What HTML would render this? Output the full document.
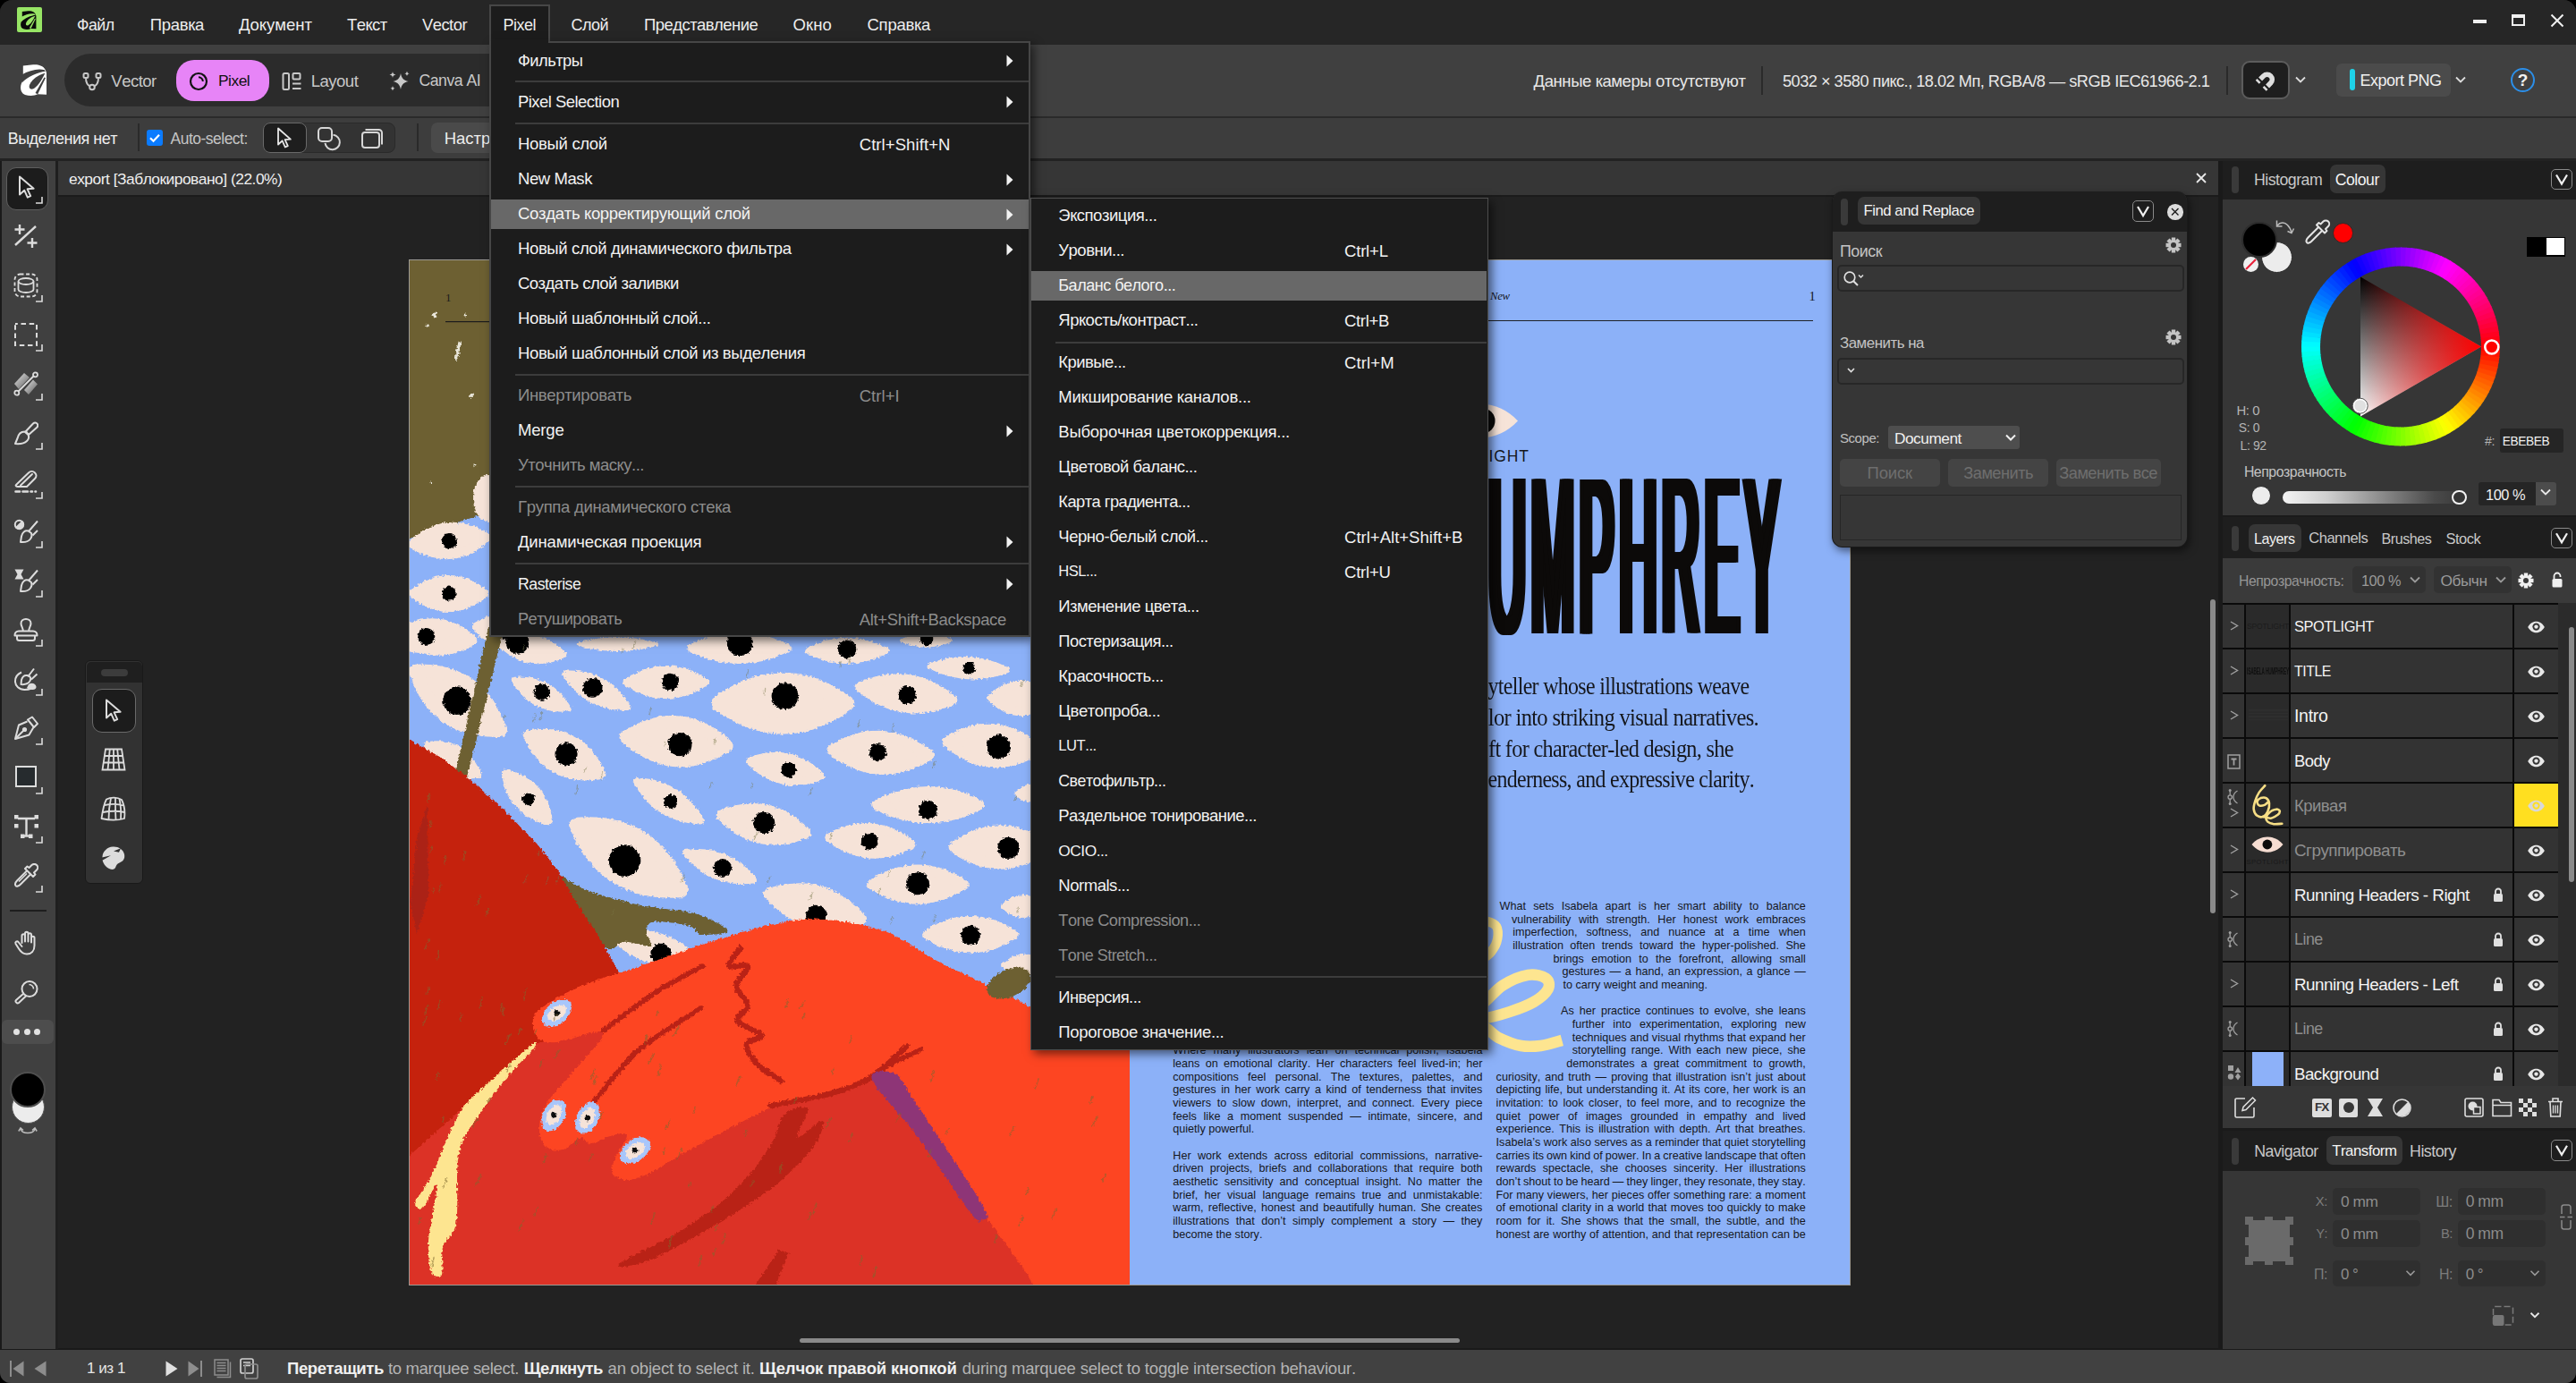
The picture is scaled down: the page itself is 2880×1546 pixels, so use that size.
<!DOCTYPE html>
<html lang="ru"><head><meta charset="utf-8"><title>Affinity</title>
<style>
html,body{margin:0;padding:0;background:#000;}
body{width:2880px;height:1546px;position:relative;overflow:hidden;font-family:'Liberation Sans','DejaVu Sans',sans-serif;font-kerning:none;}
#app{position:absolute;left:0;top:0;width:2880px;height:1546px;overflow:hidden;border-radius:14px 14px 12px 12px;background:#262626;}
#app div,#app span,#app svg{box-sizing:border-box;}
</style></head><body><div id="app">
<div style="position:absolute;left:65px;top:180px;width:2415px;height:39px;background:#363636;"></div>
<div style="position:absolute;left:65px;top:218px;width:2415px;height:2px;background:#1b1b1b;"></div>
<div style="position:absolute;left:65px;top:220px;width:2415px;height:1288px;background:#222222;"></div>
<span style="position:absolute;left:77.0px;top:188.0px;line-height:24px;font-size:17.37px;color:#efefef;font-weight:400;font-family:'Liberation Sans','DejaVu Sans',sans-serif;white-space:pre;letter-spacing:-0.486px;">export [Заблокировано] (22.0%)</span>
<svg style="position:absolute;left:2454px;top:192px;" width="14" height="14" viewBox="0 0 14 14" fill="none"><path d="M2 2l10 10M12 2L2 12" stroke="#e8e8e8" stroke-width="1.800"/></svg>
<div style="position:absolute;left:2480px;top:179px;width:5px;height:1329px;background:#1a1a1a;"></div>
<div style="position:absolute;left:457px;top:290px;width:1612px;height:1147px;background:#9c9a94;"></div>
<div style="position:absolute;left:1263px;top:291px;width:805px;height:1145px;background:#8cb1f8;"></div>
<span style="position:absolute;left:1666.0px;top:322.0px;line-height:19px;font-size:12.74px;color:#15171c;font-weight:400;font-family:'Liberation Serif','DejaVu Serif',serif;white-space:pre;letter-spacing:-0.357px;font-style:italic;">New</span>
<span style="position:absolute;left:2022.5px;top:322.0px;line-height:19px;font-size:14.5px;color:#15171c;font-weight:400;font-family:'Liberation Serif','DejaVu Serif',serif;white-space:pre;">1</span>
<div style="position:absolute;left:1311px;top:357.5px;width:716px;height:1.3px;background:#1f2126;"></div>
<svg style="position:absolute;left:1617px;top:447.8px;" width="81" height="45" viewBox="0 0 81 45" fill="none"><path d="M1 22.500C24 -2.500 56 -2.500 80 22.500C56 47.500 24 47.500 1 22.500z" fill="#f6e3d8"/><circle cx="40.500" cy="22.500" r="14" fill="#0b0b0b"/></svg>
<span style="position:absolute;left:1603.0px;top:499.0px;line-height:22px;font-size:17.46px;color:#15171c;font-weight:400;font-family:'Liberation Sans','DejaVu Sans',sans-serif;white-space:pre;letter-spacing:0.873px;">SPOTLIGHT</span>
<span style="position:absolute;left:1311px;top:476.500px;line-height:290px;font-size:250px;font-weight:400;color:#0c0a09;white-space:pre;font-family:'Liberation Sans','DejaVu Sans',sans-serif;transform-origin:0 0;transform:scaleX(0.23);letter-spacing:27px;text-shadow:19px 0 0 #0c0a09,-19px 0 0 #0c0a09,9px 0 0 #0c0a09,-9px 0 0 #0c0a09;" id="title">ISABELA HUMPHREY</span>
<span style="position:absolute;left:1663.5px;top:749.3px;line-height:36px;font-size:23.91px;color:#15171c;font-weight:400;font-family:'Liberation Serif','DejaVu Serif',serif;white-space:pre;letter-spacing:-0.670px;transform:scaleY(1.120);">yteller whose illustrations weave</span>
<span style="position:absolute;left:1663.8px;top:784.3px;line-height:36px;font-size:24.58px;color:#15171c;font-weight:400;font-family:'Liberation Serif','DejaVu Serif',serif;white-space:pre;letter-spacing:-0.688px;transform:scaleY(1.120);">lor into striking visual narratives.</span>
<span style="position:absolute;left:1664.0px;top:818.8px;line-height:36px;font-size:24.26px;color:#15171c;font-weight:400;font-family:'Liberation Serif','DejaVu Serif',serif;white-space:pre;letter-spacing:-0.679px;transform:scaleY(1.120);">ft for character-led design, she</span>
<span style="position:absolute;left:1663.5px;top:853.3px;line-height:36px;font-size:23.88px;color:#15171c;font-weight:400;font-family:'Liberation Serif','DejaVu Serif',serif;white-space:pre;letter-spacing:-0.669px;transform:scaleY(1.120);">enderness, and expressive clarity.</span>
<span style="position:absolute;left:1676.6px;top:1004.8px;line-height:16px;font-size:12.6px;color:#15171c;font-family:'Liberation Sans','DejaVu Sans',sans-serif;white-space:pre;word-spacing:4.810px;">What sets Isabela apart is her smart ability to balance</span>
<span style="position:absolute;left:1689.9px;top:1019.5px;line-height:16px;font-size:12.6px;color:#15171c;font-family:'Liberation Sans','DejaVu Sans',sans-serif;white-space:pre;word-spacing:5.002px;">vulnerability with strength. Her honest work embraces</span>
<span style="position:absolute;left:1691.3px;top:1034.1px;line-height:16px;font-size:12.6px;color:#15171c;font-family:'Liberation Sans','DejaVu Sans',sans-serif;white-space:pre;word-spacing:6.681px;">imperfection, softness, and nuance at a time when</span>
<span style="position:absolute;left:1691.3px;top:1048.8px;line-height:16px;font-size:12.6px;color:#15171c;font-family:'Liberation Sans','DejaVu Sans',sans-serif;white-space:pre;word-spacing:3.828px;">illustration often trends toward the hyper-polished. She</span>
<span style="position:absolute;left:1736.6px;top:1063.5px;line-height:16px;font-size:12.6px;color:#15171c;font-family:'Liberation Sans','DejaVu Sans',sans-serif;white-space:pre;word-spacing:4.799px;">brings emotion to the forefront, allowing small</span>
<span style="position:absolute;left:1746.4px;top:1078.1px;line-height:16px;font-size:12.6px;color:#15171c;font-family:'Liberation Sans','DejaVu Sans',sans-serif;white-space:pre;word-spacing:1.234px;">gestures — a hand, an expression, a glance —</span>
<span style="position:absolute;left:1747.4px;top:1092.8px;line-height:16px;font-size:12.6px;color:#15171c;font-family:'Liberation Sans','DejaVu Sans',sans-serif;white-space:pre;">to carry weight and meaning.</span>
<span style="position:absolute;left:1745.0px;top:1122.2px;line-height:16px;font-size:12.6px;color:#15171c;font-family:'Liberation Sans','DejaVu Sans',sans-serif;white-space:pre;word-spacing:2.512px;">As her practice continues to evolve, she leans</span>
<span style="position:absolute;left:1757.7px;top:1136.8px;line-height:16px;font-size:12.6px;color:#15171c;font-family:'Liberation Sans','DejaVu Sans',sans-serif;white-space:pre;word-spacing:5.771px;">further into experimentation, exploring new</span>
<span style="position:absolute;left:1757.7px;top:1151.5px;line-height:16px;font-size:12.6px;color:#15171c;font-family:'Liberation Sans','DejaVu Sans',sans-serif;white-space:pre;word-spacing:0.110px;">techniques and visual rhythms that expand her</span>
<span style="position:absolute;left:1757.7px;top:1166.2px;line-height:16px;font-size:12.6px;color:#15171c;font-family:'Liberation Sans','DejaVu Sans',sans-serif;white-space:pre;word-spacing:2.446px;">storytelling range. With each new piece, she</span>
<span style="position:absolute;left:1751.3px;top:1180.8px;line-height:16px;font-size:12.6px;color:#15171c;font-family:'Liberation Sans','DejaVu Sans',sans-serif;white-space:pre;word-spacing:3.522px;">demonstrates a great commitment to growth,</span>
<span style="position:absolute;left:1672.6px;top:1195.5px;line-height:16px;font-size:12.6px;color:#15171c;font-family:'Liberation Sans','DejaVu Sans',sans-serif;white-space:pre;word-spacing:1.522px;">curiosity, and truth — proving that illustration isn’t just about</span>
<span style="position:absolute;left:1672.6px;top:1210.2px;line-height:16px;font-size:12.6px;color:#15171c;font-family:'Liberation Sans','DejaVu Sans',sans-serif;white-space:pre;word-spacing:0.926px;">depicting life, but understanding it. At its core, her work is an</span>
<span style="position:absolute;left:1672.6px;top:1224.8px;line-height:16px;font-size:12.6px;color:#15171c;font-family:'Liberation Sans','DejaVu Sans',sans-serif;white-space:pre;word-spacing:2.067px;">invitation: to look closer, to feel more, and to recognize the</span>
<span style="position:absolute;left:1672.6px;top:1239.5px;line-height:16px;font-size:12.6px;color:#15171c;font-family:'Liberation Sans','DejaVu Sans',sans-serif;white-space:pre;word-spacing:5.906px;">quiet power of images grounded in empathy and lived</span>
<span style="position:absolute;left:1672.6px;top:1254.2px;line-height:16px;font-size:12.6px;color:#15171c;font-family:'Liberation Sans','DejaVu Sans',sans-serif;white-space:pre;word-spacing:2.062px;">experience. This is illustration with depth. Art that breathes.</span>
<span style="position:absolute;left:1672.6px;top:1268.9px;line-height:16px;font-size:12.6px;color:#15171c;font-family:'Liberation Sans','DejaVu Sans',sans-serif;white-space:pre;word-spacing:-0.033px;">Isabela’s work also serves as a reminder that quiet storytelling</span>
<span style="position:absolute;left:1672.6px;top:1283.5px;line-height:16px;font-size:12.6px;color:#15171c;font-family:'Liberation Sans','DejaVu Sans',sans-serif;white-space:pre;word-spacing:-0.475px;">carries its own kind of power. In a creative landscape that often</span>
<span style="position:absolute;left:1672.6px;top:1298.2px;line-height:16px;font-size:12.6px;color:#15171c;font-family:'Liberation Sans','DejaVu Sans',sans-serif;white-space:pre;word-spacing:3.921px;">rewards spectacle, she chooses sincerity. Her illustrations</span>
<span style="position:absolute;left:1672.6px;top:1312.9px;line-height:16px;font-size:12.6px;color:#15171c;font-family:'Liberation Sans','DejaVu Sans',sans-serif;white-space:pre;word-spacing:-0.414px;">don’t shout to be heard — they linger, they resonate, they stay.</span>
<span style="position:absolute;left:1672.6px;top:1327.5px;line-height:16px;font-size:12.6px;color:#15171c;font-family:'Liberation Sans','DejaVu Sans',sans-serif;white-space:pre;word-spacing:0.281px;">For many viewers, her pieces offer something rare: a moment</span>
<span style="position:absolute;left:1672.6px;top:1342.2px;line-height:16px;font-size:12.6px;color:#15171c;font-family:'Liberation Sans','DejaVu Sans',sans-serif;white-space:pre;word-spacing:0.673px;">of emotional clarity in a world that moves too quickly to make</span>
<span style="position:absolute;left:1672.6px;top:1356.9px;line-height:16px;font-size:12.6px;color:#15171c;font-family:'Liberation Sans','DejaVu Sans',sans-serif;white-space:pre;word-spacing:2.899px;">room for it. She shows that the small, the subtle, and the</span>
<span style="position:absolute;left:1672.6px;top:1371.5px;line-height:16px;font-size:12.6px;color:#15171c;font-family:'Liberation Sans','DejaVu Sans',sans-serif;white-space:pre;word-spacing:0.270px;">honest are worthy of attention, and that representation can be</span>
<span style="position:absolute;left:1311.3px;top:1166.2px;line-height:16px;font-size:12.6px;color:#15171c;font-family:'Liberation Sans','DejaVu Sans',sans-serif;white-space:pre;word-spacing:4.541px;">Where many illustrators lean on technical polish, Isabela</span>
<span style="position:absolute;left:1311.3px;top:1180.8px;line-height:16px;font-size:12.6px;color:#15171c;font-family:'Liberation Sans','DejaVu Sans',sans-serif;white-space:pre;word-spacing:2.751px;">leans on emotional clarity. Her characters feel lived-in; her</span>
<span style="position:absolute;left:1311.3px;top:1195.5px;line-height:16px;font-size:12.6px;color:#15171c;font-family:'Liberation Sans','DejaVu Sans',sans-serif;white-space:pre;word-spacing:6.811px;">compositions feel personal. The textures, palettes, and</span>
<span style="position:absolute;left:1311.3px;top:1210.2px;line-height:16px;font-size:12.6px;color:#15171c;font-family:'Liberation Sans','DejaVu Sans',sans-serif;white-space:pre;word-spacing:2.060px;">gestures in her work carry a kind of tenderness that invites</span>
<span style="position:absolute;left:1311.3px;top:1224.8px;line-height:16px;font-size:12.6px;color:#15171c;font-family:'Liberation Sans','DejaVu Sans',sans-serif;white-space:pre;word-spacing:3.186px;">viewers to slow down, interpret, and connect. Every piece</span>
<span style="position:absolute;left:1311.3px;top:1239.5px;line-height:16px;font-size:12.6px;color:#15171c;font-family:'Liberation Sans','DejaVu Sans',sans-serif;white-space:pre;word-spacing:4.147px;">feels like a moment suspended — intimate, sincere, and</span>
<span style="position:absolute;left:1311.3px;top:1254.2px;line-height:16px;font-size:12.6px;color:#15171c;font-family:'Liberation Sans','DejaVu Sans',sans-serif;white-space:pre;">quietly powerful.</span>
<span style="position:absolute;left:1311.3px;top:1283.5px;line-height:16px;font-size:12.6px;color:#15171c;font-family:'Liberation Sans','DejaVu Sans',sans-serif;white-space:pre;word-spacing:3.907px;">Her work extends across editorial commissions, narrative-</span>
<span style="position:absolute;left:1311.3px;top:1298.2px;line-height:16px;font-size:12.6px;color:#15171c;font-family:'Liberation Sans','DejaVu Sans',sans-serif;white-space:pre;word-spacing:3.639px;">driven projects, briefs and collaborations that require both</span>
<span style="position:absolute;left:1311.3px;top:1312.9px;line-height:16px;font-size:12.6px;color:#15171c;font-family:'Liberation Sans','DejaVu Sans',sans-serif;white-space:pre;word-spacing:3.639px;">aesthetic sensitivity and conceptual insight. No matter the</span>
<span style="position:absolute;left:1311.3px;top:1327.5px;line-height:16px;font-size:12.6px;color:#15171c;font-family:'Liberation Sans','DejaVu Sans',sans-serif;white-space:pre;word-spacing:3.738px;">brief, her visual language remains true and unmistakable:</span>
<span style="position:absolute;left:1311.3px;top:1342.2px;line-height:16px;font-size:12.6px;color:#15171c;font-family:'Liberation Sans','DejaVu Sans',sans-serif;white-space:pre;word-spacing:1.740px;">warm, reflective, honest and beautifully human. She creates</span>
<span style="position:absolute;left:1311.3px;top:1356.9px;line-height:16px;font-size:12.6px;color:#15171c;font-family:'Liberation Sans','DejaVu Sans',sans-serif;white-space:pre;word-spacing:3.977px;">illustrations that don’t simply complement a story — they</span>
<span style="position:absolute;left:1311.3px;top:1371.5px;line-height:16px;font-size:12.6px;color:#15171c;font-family:'Liberation Sans','DejaVu Sans',sans-serif;white-space:pre;">become the story.</span>
<svg style="position:absolute;left:0;top:0" width="2880" height="1546" viewBox="0 0 2880 1546"><path d="M1608.2 1040.5C1611.9 1038.3 1622.5 1029.7 1630.5 1027.7C1638.4 1025.7 1649.0 1027.5 1655.9 1028.5C1662.8 1029.6 1668.7 1031.3 1671.8 1034.1C1674.9 1036.9 1674.9 1041.0 1674.7 1045.2C1674.4 1049.5 1673.1 1055.2 1670.2 1059.5C1667.4 1063.9 1665.2 1067.8 1657.5 1071.5C1649.8 1075.2 1629.7 1080.1 1624.1 1081.8" stroke="#fde590" stroke-width="10.5" stroke-linecap="butt" stroke-linejoin="round" fill="none"/><path d="M1600.2 1140.7C1605.3 1139.3 1621.2 1135.6 1630.5 1132.7C1639.7 1129.8 1647.7 1128.3 1655.9 1123.2C1664.1 1118.0 1671.0 1107.3 1679.8 1101.7C1688.5 1096.1 1700.3 1091.1 1708.4 1089.8C1716.5 1088.4 1724.6 1091.1 1728.3 1093.7C1732.0 1096.4 1732.9 1101.3 1730.7 1105.7C1728.4 1110.1 1721.9 1115.8 1714.8 1120.0C1707.6 1124.2 1697.5 1127.9 1687.7 1131.1C1677.9 1134.3 1666.0 1137.5 1655.9 1139.1C1645.8 1140.7 1633.1 1139.1 1627.3 1140.7C1621.4 1142.3 1616.1 1147.6 1620.9 1148.6C1625.7 1149.7 1646.9 1145.2 1655.9 1147.0C1664.9 1148.9 1667.6 1156.1 1675.0 1159.8C1682.4 1163.4 1692.5 1167.5 1700.5 1169.0C1708.4 1170.5 1715.1 1170.0 1722.7 1169.0C1730.4 1168.0 1742.3 1164.0 1746.3 1162.9" stroke="#fde590" stroke-width="12.5" stroke-linecap="butt" stroke-linejoin="round" fill="none"/></svg>
<svg style="position:absolute;left:0;top:0" width="2880" height="1546" viewBox="0 0 2880 1546"><defs><filter id="rough" x="-2%" y="-2%" width="104%" height="104%"><feTurbulence type="fractalNoise" baseFrequency="0.35" numOctaves="2" seed="3" result="n"/><feDisplacementMap in="SourceGraphic" in2="n" scale="5" xChannelSelector="R" yChannelSelector="G"/></filter><clipPath id="lp"><rect x="458" y="291" width="805" height="1145"/></clipPath></defs><g clip-path="url(#lp)"><g filter="url(#rough)"><rect x="440" y="280" width="840" height="1170" fill="#6d6030"/><polygon points="440.0,608.0 548.0,572.0 700.0,520.0 1280.0,520.0 1280.0,1450.0 440.0,1450.0" fill="#8cb1f8" /><path d="M-41.4 0Q0 -30.6 41.4 0Q0 30.6 -41.4 0Z" fill="#f6e3d8" transform="translate(502.5,604.5) rotate(-5)" stroke="#f6e3d8" stroke-width="10.2" stroke-linejoin="round"/><circle cx="502.5" cy="604.5" r="8.5" fill="#060606"/><path d="M-39.5 0Q0 -30.6 39.5 0Q0 30.6 -39.5 0Z" fill="#f6e3d8" transform="translate(501.8,663.5) rotate(0)" stroke="#f6e3d8" stroke-width="10.2" stroke-linejoin="round"/><circle cx="501.8" cy="663.5" r="8.0" fill="#060606"/><path d="M-41.4 0Q0 -30.6 41.4 0Q0 30.6 -41.4 0Z" fill="#f6e3d8" transform="translate(487.0,712.0) rotate(5)" stroke="#f6e3d8" stroke-width="10.2" stroke-linejoin="round"/><circle cx="477.0" cy="712.0" r="10.0" fill="#060606"/><path d="M-28.2 0Q0 -25.5 28.2 0Q0 25.5 -28.2 0Z" fill="#f6e3d8" transform="translate(560.0,705.0) rotate(10)" stroke="#f6e3d8" stroke-width="8.5" stroke-linejoin="round"/><circle cx="575.0" cy="717.0" r="14.0" fill="#060606"/><ellipse cx="545" cy="557" rx="16" ry="26" fill="#f6e3d8"/><path d="M-37.8 0Q0 -24.9 37.8 0Q0 24.9 -37.8 0Z" fill="#f6e3d8" transform="translate(477.3,712.9) rotate(-8)" stroke="#f6e3d8" stroke-width="8.3" stroke-linejoin="round"/><circle cx="476.8" cy="711.5" r="9.5" fill="#060606"/><path d="M-35.1 0Q0 -23.4 35.1 0Q0 23.4 -35.1 0Z" fill="#f6e3d8" transform="translate(595.1,725.9) rotate(10)" stroke="#f6e3d8" stroke-width="7.8" stroke-linejoin="round"/><circle cx="578.5" cy="717.8" r="12.9" fill="#060606"/><path d="M-43.2 0Q0 -11.7 43.2 0Q0 11.7 -43.2 0Z" fill="#f6e3d8" transform="translate(689.9,720.1) rotate(0)" stroke="#f6e3d8" stroke-width="3.9" stroke-linejoin="round"/><path d="M-54.0 0Q0 -26.4 54.0 0Q0 26.4 -54.0 0Z" fill="#f6e3d8" transform="translate(826.4,724.4) rotate(0)" stroke="#f6e3d8" stroke-width="8.8" stroke-linejoin="round"/><circle cx="827.2" cy="718.7" r="14.4" fill="#060606"/><path d="M-43.2 0Q0 -22.0 43.2 0Q0 22.0 -43.2 0Z" fill="#f6e3d8" transform="translate(947.0,727.3) rotate(0)" stroke="#f6e3d8" stroke-width="7.3" stroke-linejoin="round"/><circle cx="947.0" cy="725.9" r="10.3" fill="#060606"/><path d="M-27.0 0Q0 -11.7 27.0 0Q0 11.7 -27.0 0Z" fill="#f6e3d8" transform="translate(1036.1,715.8) rotate(0)" stroke="#f6e3d8" stroke-width="3.9" stroke-linejoin="round"/><circle cx="1036.1" cy="714.4" r="7.2" fill="#060606"/><path d="M-43.2 0Q0 -19.0 43.2 0Q0 19.0 -43.2 0Z" fill="#f6e3d8" transform="translate(1082.9,746.8) rotate(3)" stroke="#f6e3d8" stroke-width="6.3" stroke-linejoin="round"/><circle cx="1083.5" cy="746.8" r="6.9" fill="#060606"/><path d="M-58.1 0Q0 -43.7 58.1 0Q0 43.7 -58.1 0Z" fill="#f6e3d8" transform="translate(511.8,783.3) rotate(35)" stroke="#f6e3d8" stroke-width="14.6" stroke-linejoin="round"/><circle cx="511.0" cy="783.3" r="15.8" fill="#060606"/><path d="M-33.8 0Q0 -21.2 33.8 0Q0 21.2 -33.8 0Z" fill="#f6e3d8" transform="translate(605.2,776.1) rotate(28)" stroke="#f6e3d8" stroke-width="7.1" stroke-linejoin="round"/><circle cx="605.8" cy="773.8" r="9.2" fill="#060606"/><path d="M-39.2 0Q0 -22.5 39.2 0Q0 22.5 -39.2 0Z" fill="#f6e3d8" transform="translate(666.9,771.8) rotate(28)" stroke="#f6e3d8" stroke-width="7.5" stroke-linejoin="round"/><circle cx="662.6" cy="768.9" r="10.9" fill="#060606"/><path d="M-43.2 0Q0 -27.8 43.2 0Q0 27.8 -43.2 0Z" fill="#f6e3d8" transform="translate(744.5,762.6) rotate(0)" stroke="#f6e3d8" stroke-width="9.3" stroke-linejoin="round"/><circle cx="749.4" cy="762.3" r="9.5" fill="#060606"/><path d="M-71.6 0Q0 -51.3 71.6 0Q0 51.3 -71.6 0Z" fill="#f6e3d8" transform="translate(875.2,786.2) rotate(0)" stroke="#f6e3d8" stroke-width="17.1" stroke-linejoin="round"/><circle cx="877.5" cy="778.1" r="14.9" fill="#060606"/><path d="M-52.7 0Q0 -32.2 52.7 0Q0 32.2 -52.7 0Z" fill="#f6e3d8" transform="translate(1013.1,775.3) rotate(8)" stroke="#f6e3d8" stroke-width="10.7" stroke-linejoin="round"/><circle cx="1014.5" cy="777.0" r="10.1" fill="#060606"/><path d="M-32.4 0Q0 -29.3 32.4 0Q0 29.3 -32.4 0Z" fill="#f6e3d8" transform="translate(1140.9,780.4) rotate(0)" stroke="#f6e3d8" stroke-width="9.8" stroke-linejoin="round"/><path d="M-45.9 0Q0 -35.0 45.9 0Q0 35.0 -45.9 0Z" fill="#f6e3d8" transform="translate(631.0,843.6) rotate(28)" stroke="#f6e3d8" stroke-width="11.7" stroke-linejoin="round"/><circle cx="633.0" cy="842.8" r="12.6" fill="#060606"/><path d="M-56.7 0Q0 -42.5 56.7 0Q0 42.5 -56.7 0Z" fill="#f6e3d8" transform="translate(756.0,828.7) rotate(5)" stroke="#f6e3d8" stroke-width="14.2" stroke-linejoin="round"/><circle cx="760.3" cy="832.1" r="13.2" fill="#060606"/><path d="M-40.5 0Q0 -26.4 40.5 0Q0 26.4 -40.5 0Z" fill="#f6e3d8" transform="translate(878.1,859.4) rotate(12)" stroke="#f6e3d8" stroke-width="8.8" stroke-linejoin="round"/><circle cx="881.8" cy="860.3" r="8.6" fill="#060606"/><path d="M-54.0 0Q0 -36.6 54.0 0Q0 36.6 -54.0 0Z" fill="#f6e3d8" transform="translate(984.4,841.3) rotate(3)" stroke="#f6e3d8" stroke-width="12.2" stroke-linejoin="round"/><circle cx="981.5" cy="840.8" r="9.8" fill="#060606"/><path d="M-50.0 0Q0 -36.6 50.0 0Q0 36.6 -50.0 0Z" fill="#f6e3d8" transform="translate(1109.3,833.6) rotate(5)" stroke="#f6e3d8" stroke-width="12.2" stroke-linejoin="round"/><circle cx="1116.5" cy="835.0" r="13.5" fill="#060606"/><path d="M-36.5 0Q0 -25.0 36.5 0Q0 25.0 -36.5 0Z" fill="#f6e3d8" transform="translate(589.4,891.0) rotate(48)" stroke="#f6e3d8" stroke-width="8.3" stroke-linejoin="round"/><circle cx="590.8" cy="893.3" r="6.9" fill="#060606"/><path d="M-41.9 0Q0 -23.7 41.9 0Q0 23.7 -41.9 0Z" fill="#f6e3d8" transform="translate(747.4,895.3) rotate(32)" stroke="#f6e3d8" stroke-width="7.9" stroke-linejoin="round"/><circle cx="749.7" cy="895.9" r="7.8" fill="#060606"/><path d="M-48.6 0Q0 -33.0 48.6 0Q0 33.0 -48.6 0Z" fill="#f6e3d8" transform="translate(853.7,921.2) rotate(12)" stroke="#f6e3d8" stroke-width="11.0" stroke-linejoin="round"/><circle cx="854.2" cy="919.8" r="12.1" fill="#060606"/><path d="M-58.1 0Q0 -30.8 58.1 0Q0 30.8 -58.1 0Z" fill="#f6e3d8" transform="translate(1037.5,899.7) rotate(0)" stroke="#f6e3d8" stroke-width="10.3" stroke-linejoin="round"/><circle cx="1037.5" cy="905.4" r="10.6" fill="#060606"/><path d="M-16.2 0Q0 -14.7 16.2 0Q0 14.7 -16.2 0Z" fill="#f6e3d8" transform="translate(1152.4,886.7) rotate(0)" stroke="#f6e3d8" stroke-width="4.9" stroke-linejoin="round"/><path d="M-68.9 0Q0 -50.0 68.9 0Q0 50.0 -68.9 0Z" fill="#f6e3d8" transform="translate(702.9,958.5) rotate(32)" stroke="#f6e3d8" stroke-width="16.7" stroke-linejoin="round"/><circle cx="698.5" cy="962.0" r="17.8" fill="#060606"/><path d="M-40.5 0Q0 -22.5 40.5 0Q0 22.5 -40.5 0Z" fill="#f6e3d8" transform="translate(804.8,968.6) rotate(22)" stroke="#f6e3d8" stroke-width="7.5" stroke-linejoin="round"/><circle cx="807.7" cy="970.0" r="10.1" fill="#060606"/><path d="M-45.9 0Q0 -29.3 45.9 0Q0 29.3 -45.9 0Z" fill="#f6e3d8" transform="translate(972.9,939.9) rotate(5)" stroke="#f6e3d8" stroke-width="9.8" stroke-linejoin="round"/><circle cx="972.3" cy="940.4" r="9.5" fill="#060606"/><path d="M-51.3 0Q0 -36.6 51.3 0Q0 36.6 -51.3 0Z" fill="#f6e3d8" transform="translate(1118.0,947.1) rotate(0)" stroke="#f6e3d8" stroke-width="12.2" stroke-linejoin="round"/><circle cx="1127.4" cy="947.9" r="12.1" fill="#060606"/><path d="M-51.3 0Q0 -33.0 51.3 0Q0 33.0 -51.3 0Z" fill="#f6e3d8" transform="translate(1026.0,988.7) rotate(0)" stroke="#f6e3d8" stroke-width="11.0" stroke-linejoin="round"/><circle cx="1026.0" cy="987.3" r="12.9" fill="#060606"/><path d="M-54.0 0Q0 -35.2 54.0 0Q0 35.2 -54.0 0Z" fill="#f6e3d8" transform="translate(911.1,1013.1) rotate(15)" stroke="#f6e3d8" stroke-width="11.7" stroke-linejoin="round"/><circle cx="912.6" cy="1023.2" r="11.5" fill="#060606"/><path d="M-48.6 0Q0 -30.8 48.6 0Q0 30.8 -48.6 0Z" fill="#f6e3d8" transform="translate(1084.9,1044.7) rotate(0)" stroke="#f6e3d8" stroke-width="10.3" stroke-linejoin="round"/><circle cx="1084.9" cy="1045.6" r="10.9" fill="#060606"/><path d="M-21.6 0Q0 -19.0 21.6 0Q0 19.0 -21.6 0Z" fill="#f6e3d8" transform="translate(1143.8,1013.1) rotate(0)" stroke="#f6e3d8" stroke-width="6.3" stroke-linejoin="round"/><path d="M-45.9 0Q0 -26.4 45.9 0Q0 26.4 -45.9 0Z" fill="#f6e3d8" transform="translate(730.1,1059.1) rotate(15)" stroke="#f6e3d8" stroke-width="8.8" stroke-linejoin="round"/><circle cx="738.8" cy="1066.3" r="11.5" fill="#060606"/><path d="M-24.3 0Q0 -19.0 24.3 0Q0 19.0 -24.3 0Z" fill="#f6e3d8" transform="translate(1146.7,1079.2) rotate(0)" stroke="#f6e3d8" stroke-width="6.3" stroke-linejoin="round"/><path d="M-32.4 0Q0 -25.0 32.4 0Q0 25.0 -32.4 0Z" fill="#f6e3d8" transform="translate(506.1,849.4) rotate(30)" stroke="#f6e3d8" stroke-width="8.3" stroke-linejoin="round"/><polygon points="546.3,700.0 564.1,700.0 521.9,869.5 508.9,865.2" fill="#6d6030" /><path d="M615.2 975.8C616.2 970.0 641.6 989.9 658.3 995.9C675.1 1001.9 695.7 1007.4 715.8 1011.7C735.9 1016.0 762.7 1017.0 779.0 1021.7C795.3 1026.5 812.5 1036.6 813.5 1040.4C814.4 1044.2 791.9 1045.7 784.7 1044.7C777.5 1043.8 779.5 1037.1 770.4 1034.7C761.3 1032.3 738.0 1029.2 730.1 1030.4C722.2 1031.6 723.4 1037.3 723.0 1041.9C722.5 1046.4 731.3 1055.8 727.3 1057.7C723.2 1059.5 706.7 1052.3 698.5 1052.8C690.4 1053.3 686.1 1064.3 678.4 1060.5C670.8 1056.8 663.1 1044.5 652.6 1030.4C642.0 1016.2 614.3 981.5 615.2 975.8Z" fill="#6d6030"/><polygon points="440.0,815.0 456.0,826.0 490.0,845.0 523.0,869.0 563.0,905.0 601.0,944.0 625.0,975.0 641.0,1004.0 665.0,1040.0 690.0,1083.0 740.0,1150.0 640.0,1200.0 440.0,1320.0" fill="#c5200e" /><polygon points="433.5,1313.4 596.5,1167.6 687.8,1141.5 994.3,1190.4 1190.0,1435.6 1190.0,1461.1 433.5,1461.1" fill="#dc3226" /><path d="M910.9 1027.4C887.5 1026.8 869.0 1032.3 847.6 1037.2C826.2 1042.1 804.3 1049.6 782.4 1056.7C760.4 1063.9 738.1 1072.3 715.9 1079.9C693.6 1087.5 667.5 1094.3 648.7 1102.4C629.9 1110.5 611.8 1121.1 603.0 1128.5C594.2 1135.8 595.9 1141.0 595.9 1146.4C595.9 1151.8 598.6 1158.0 603.0 1161.1C607.5 1164.2 610.7 1166.1 622.6 1165.0C634.6 1163.9 672.6 1148.2 674.8 1154.6C677.0 1161.0 646.5 1189.9 635.7 1203.5C624.8 1217.1 615.0 1226.3 609.6 1236.1C604.1 1245.9 603.0 1254.6 603.0 1262.2C603.0 1269.8 605.2 1277.9 609.6 1281.7C613.9 1285.5 622.6 1286.6 629.1 1285.0C635.7 1283.4 643.3 1272.9 648.7 1272.0C654.1 1271.0 656.3 1279.4 661.7 1279.1C667.2 1278.9 674.8 1272.1 681.3 1270.3C687.8 1268.6 699.8 1264.6 700.9 1268.7C702.0 1272.8 690.5 1287.7 687.8 1294.8C685.1 1301.8 682.4 1307.0 684.6 1311.1C686.7 1315.2 693.8 1319.2 700.9 1319.2C707.9 1319.2 716.1 1316.2 727.0 1311.1C737.8 1305.9 743.3 1300.5 766.1 1288.3C788.9 1276.0 836.7 1248.6 863.9 1237.7C891.1 1226.8 910.6 1228.2 929.1 1223.0C947.6 1217.9 960.6 1203.5 974.8 1206.7C988.9 1210.0 992.7 1217.1 1013.9 1242.6C1035.1 1268.1 1078.0 1327.8 1101.9 1360.0C1125.9 1392.2 1144.9 1418.8 1157.4 1435.6C1169.9 1452.5 1155.2 1456.8 1176.9 1461.1C1198.7 1465.3 1269.3 1503.5 1287.8 1461.1C1306.3 1418.7 1310.6 1262.7 1287.8 1206.7C1265.0 1150.8 1190.7 1147.2 1150.9 1125.2C1111.0 1103.2 1076.0 1088.8 1048.8 1074.7C1021.6 1060.5 1010.8 1048.3 987.8 1040.4C964.8 1032.6 934.2 1027.9 910.9 1027.4Z" fill="#fd4523"/><polygon points="1124.8,1386.1 1265.0,1157.8 1287.8,1157.8 1287.8,1461.1 1170.4,1461.1" fill="#fd4523" /><ellipse cx="1128.0" cy="1099.1" rx="26" ry="15" fill="#6d6030" transform="rotate(-25 1128.0 1099.1)"/><path d="M785.6 1080.2C777.0 1085.0 752.0 1097.0 733.5 1108.9C715.0 1120.9 684.6 1144.8 674.8 1152.0" stroke="#b92214" stroke-width="5.5" stroke-linecap="round" stroke-linejoin="round" fill="none"/><path d="M784.0 1126.8C772.3 1134.7 733.7 1156.9 713.9 1174.1C694.1 1191.4 673.1 1220.9 665.0 1230.2" stroke="#b92214" stroke-width="5.5" stroke-linecap="round" stroke-linejoin="round" fill="none"/><path d="M828.0 1060.0C825.9 1063.3 813.6 1076.2 815.0 1079.6C816.4 1082.9 834.8 1076.4 836.2 1080.2C837.6 1084.0 823.1 1095.2 823.1 1102.4C823.1 1109.6 835.9 1117.1 836.2 1123.6C836.5 1130.1 822.2 1135.9 824.8 1141.5C827.3 1147.1 849.9 1152.8 851.5 1157.2C853.1 1161.5 835.2 1162.1 834.6 1167.6C833.9 1173.2 841.1 1183.6 847.6 1190.4C854.1 1197.2 869.3 1205.4 873.7 1208.4" stroke="#b92214" stroke-width="6" stroke-linecap="round" stroke-linejoin="round" fill="none"/><path d="M860.6 1236.1C872.1 1233.8 910.1 1227.8 929.1 1222.4C948.1 1217.0 960.6 1212.3 974.8 1203.5C988.9 1194.6 1007.4 1174.9 1013.9 1169.2" stroke="#b92214" stroke-width="6" stroke-linecap="round" stroke-linejoin="round" fill="none"/><path d="M981.3 1197.0C989.5 1192.9 1022.1 1176.6 1030.2 1172.5" stroke="#b92214" stroke-width="5" stroke-linecap="round" stroke-linejoin="round" fill="none"/><path d="M696.0 1410.5C706.8 1403.5 745.2 1386.4 766.1 1373.0C787.0 1359.7 805.8 1345.9 821.5 1330.6C837.3 1315.4 851.4 1295.9 860.6 1281.7C869.9 1267.6 869.9 1252.9 877.0 1245.9C884.0 1238.8 900.6 1235.0 903.0 1239.3C905.5 1243.7 888.9 1269.8 891.6 1272.0C894.3 1274.1 916.4 1250.8 919.3 1252.4C922.3 1254.0 918.8 1269.2 909.6 1281.7C900.3 1294.2 882.4 1312.7 863.9 1327.4C845.4 1342.1 820.4 1356.7 798.7 1369.8C777.0 1382.8 749.8 1398.0 733.5 1405.6C717.2 1413.3 707.1 1414.6 700.9 1415.4C694.6 1416.2 685.1 1417.6 696.0 1410.5Z" fill="#b92214"/><polygon points="828.0,1461.1 870.4,1397.5 881.8,1400.8 857.4,1461.1" fill="#b92214" /><path d="M974.8 1206.7C970.4 1194.8 992.7 1195.9 1000.9 1200.2C1009.0 1204.6 1012.3 1216.0 1023.7 1232.8C1035.1 1249.7 1056.3 1281.2 1069.3 1301.3C1082.4 1321.4 1097.1 1343.1 1101.9 1353.5C1106.8 1363.8 1101.4 1362.7 1098.7 1363.3C1096.0 1363.8 1097.6 1372.0 1085.6 1356.7C1073.7 1341.5 1045.4 1297.0 1027.0 1272.0C1008.5 1247.0 979.1 1218.7 974.8 1206.7Z" fill="#8e3577"/><path d="M594.9 1167.6C587.8 1172.8 567.4 1191.0 554.1 1203.5C540.8 1216.0 527.0 1224.1 515.0 1242.6C503.0 1261.1 490.8 1297.5 482.4 1314.3C474.0 1331.2 466.1 1337.7 464.5 1343.7C462.8 1349.7 468.5 1353.5 472.6 1350.2C476.7 1347.0 487.8 1318.1 488.9 1324.1C490.0 1330.1 480.2 1369.8 479.1 1386.1C478.0 1402.4 479.9 1415.4 482.4 1422.0C484.8 1428.5 491.6 1430.1 493.8 1425.2C496.0 1420.3 492.7 1402.4 495.4 1392.6C498.2 1382.8 507.1 1383.9 510.1 1366.5C513.1 1349.1 508.7 1308.9 513.4 1288.3C518.0 1267.6 528.3 1257.3 537.8 1242.6C547.3 1227.9 560.7 1211.9 570.4 1200.2C580.2 1188.5 592.4 1177.9 596.5 1172.5C600.6 1167.1 602.0 1162.4 594.9 1167.6Z" fill="#fde590"/><g transform="translate(622.6,1132.4) rotate(-40)"><ellipse rx="19" ry="12" fill="#a8c6fb"/><ellipse rx="12" ry="7.500" fill="#f6e3d8"/><circle r="3.200" fill="#111"/></g><g transform="translate(619.3,1246.5) rotate(-62)"><ellipse rx="19" ry="12" fill="#a8c6fb"/><ellipse rx="12" ry="7.500" fill="#f6e3d8"/><circle r="3.200" fill="#111"/></g><g transform="translate(656.8,1249.8) rotate(-62)"><ellipse rx="19" ry="12" fill="#a8c6fb"/><ellipse rx="12" ry="7.500" fill="#f6e3d8"/><circle r="3.200" fill="#111"/></g><g transform="translate(710.0,1286.0) rotate(-35)"><ellipse rx="19" ry="12" fill="#a8c6fb"/><ellipse rx="12" ry="7.500" fill="#f6e3d8"/><circle r="3.200" fill="#111"/></g><path d="M721 1167l2.1 -10.3M888 1233l2.2 -6.0M495 1254l1.3 -6.4M800 1376l1.7 -6.6M961 1414l3.1 -9.6M1236 1134l3.3 -11.6M579 1157l3.6 -7.3M608 1300l3.1 -10.0M898 1139l1.6 -6.2M1003 1253l3.0 -7.6M823 1213l4.7 -10.6M658 1298l4.5 -8.6M1041 1209l2.8 -12.6M795 1355l2.4 -6.6M496 1327l4.2 -10.6M1157 1217l4.1 -10.1M923 1261l5.7 -10.4M840 1326l2.6 -5.9M976 1428l3.2 -11.3M770 1327l2.0 -5.8M598 1156l2.7 -5.8M567 1197l4.0 -7.8M529 1259l4.6 -8.7M1112 1388l2.5 -7.5M748 1394l2.9 -12.4M604 1192l2.6 -7.2M930 1201l1.9 -5.7M757 1296l5.1 -11.6M872 1311l2.1 -10.5M1176 1362l5.3 -10.9M775 1244l2.6 -6.2M514 1141l1.7 -7.3M734 1136l1.4 -5.8M545 1233l2.9 -5.5M950 1166l2.3 -7.4M753 1158l5.9 -10.4M833 1270l1.4 -6.5M736 1202l2.7 -11.5M483 1415l2.2 -9.5M894 1128l4.8 -8.4M1147 1336l2.3 -7.5M597 1359l4.2 -8.8M725 1189l5.8 -10.1M1139 1370l4.9 -10.6M644 1280l1.6 -8.3M487 1207l3.2 -7.1M1221 1259l6.2 -10.9M1219 1233l1.9 -7.3M620 1183l4.9 -9.2M1129 1269l4.6 -9.5M532 1325l5.4 -11.1M1058 1268l3.2 -6.5M728 1368l3.9 -12.2M782 1414l2.6 -10.8M565 1167l5.4 -11.1M580 1376l5.1 -11.8M742 1290l1.2 -6.8M1232 1321l4.6 -8.5M808 1390l2.9 -11.4M664 1211l2.8 -7.1M670 1250l3.3 -6.1M744 1262l4.7 -8.9M797 1404l3.4 -8.9M879 1126l2.1 -8.8M468 1368l2.4 -6.8M1038 1293l2.9 -7.8M904 1363l2.4 -6.3M661 1206l3.9 -10.7M909 1356l4.0 -11.7M949 1277l3.9 -8.8M543 1024l3.6 -8.1M586 1117l2.1 -11.5M562 1135l1.5 -10.9M484 999l1.1 -6.3M475 1061l4.2 -9.9M489 1073l1.4 -9.9M619 1141l3.0 -6.7M533 1012l4.4 -11.1M491 997l1.9 -8.9M497 966l1.0 -10.3M465 970l2.6 -9.4M473 1146l4.4 -9.8M481 952l2.2 -5.8M537 1126l1.9 -10.7M489 1128l3.1 -8.9M478 896l2.4 -9.8M475 1133l3.5 -9.2M477 1111l2.4 -5.9M560 1130l1.0 -7.5M481 924l1.0 -6.2M518 962l2.0 -10.4" stroke="#7d6a30" stroke-width="1.600" stroke-linecap="round" opacity="0.550" fill="none"/><path d="M855 777l0.6 -6.7M708 725l2.8 -8.2M672 872l1.3 -9.6M1043 858l3.3 -6.7M792 882l4.2 -7.3M762 986l3.0 -8.0M799 831l0.8 -5.2M602 957l1.0 -6.2M610 989l3.5 -8.7M726 798l1.8 -6.2M653 863l3.1 -5.5M1134 895l3.0 -5.4M743 834l1.3 -4.8M840 881l1.8 -5.7M563 805l1.4 -5.3M585 727l1.2 -6.4M905 889l3.2 -8.1M982 1001l1.6 -6.8M1141 768l3.1 -8.0M586 987l3.3 -8.9M993 980l1.8 -5.4M858 987l3.9 -8.1M905 1006l3.2 -7.8M696 730l1.4 -5.5M622 987l2.8 -7.3M929 938l0.7 -7.4M1031 959l2.4 -7.1M949 741l1.7 -8.5M604 805l1.5 -8.5M996 1032l1.9 -7.2M843 939l3.1 -8.3M939 745l1.1 -5.6M998 817l0.7 -7.8M596 806l3.2 -7.7M959 813l2.2 -7.3M835 758l1.6 -9.3M1137 1020l1.4 -4.9M1044 1030l1.5 -7.1M684 1023l2.0 -5.7M644 888l1.4 -9.7" stroke="#77784a" stroke-width="1.300" stroke-linecap="round" opacity="0.450" fill="none"/><polygon points="466.0,935.0 478.0,900.0 479.0,1000.0 466.0,1045.0 459.0,1010.0" fill="#ab2418" /><g fill="#e9e6da"><ellipse cx="512" cy="392" rx="2" ry="11" transform="rotate(12 512 392)"/><circle cx="486" cy="352" r="2.500"/><circle cx="478" cy="364" r="1.800"/><circle cx="527" cy="442" r="2"/><circle cx="531" cy="520" r="1.600"/><circle cx="482" cy="540" r="1.500"/><circle cx="520" cy="352" r="1.500"/></g></g></g><rect x="498" y="359" width="60" height="1.200" fill="#1c1c1c"/><text x="498" y="337" font-family="Liberation Serif,serif" font-size="13" fill="#1c1c1c">1</text></svg>
<div style="position:absolute;left:894px;top:1495.5px;width:738px;height:5px;background:#8a8a8a;border-radius:3px;"></div>
<div style="position:absolute;left:2470.5px;top:670px;width:6px;height:351px;background:#8a8a8a;border-radius:3px;"></div>
<div style="position:absolute;left:95px;top:738px;width:65px;height:250px;background:#323232;border-radius:6px;border:1.500px solid #191919;box-sizing:border-box;"></div>
<div style="position:absolute;left:96.5px;top:739.5px;width:62px;height:23px;background:#1f1f1f;border-radius:5px 5px 0 0;"></div>
<div style="position:absolute;left:113px;top:748px;width:30px;height:8px;background:#3c3c3c;border-radius:4px;"></div>
<div style="position:absolute;left:103px;top:770px;width:48.5px;height:48.5px;background:#1c1c1c;border-radius:11px;border:1.500px solid #6a6a6a;box-sizing:border-box;"></div>
<svg style="position:absolute;left:113px;top:780px;" width="28" height="30" viewBox="0 0 28 30" fill="none"><path d="M6 2.500v20l5.200-4.800 3.600 8 3.400-1.500-3.600-7.900 7-.5z" stroke="#dcdcdc" stroke-width="2" stroke-linejoin="round"/></svg>
<svg style="position:absolute;left:113px;top:836px;" width="28" height="26" viewBox="0 0 28 26" fill="none"><g stroke="#dcdcdc" stroke-width="1.800"><path d="M5 1.500h18l3.500 23h-25z"/><path d="M9.800 1.500L7.500 24.500M14 1.500v23M18.200 1.500l2.300 23M3.800 9h20.400M2.700 16.500h22.600"/></g></svg>
<svg style="position:absolute;left:112px;top:890px;" width="30" height="28" viewBox="0 0 30 28" fill="none"><g stroke="#dcdcdc" stroke-width="1.800" stroke-linejoin="round"><path d="M7 3.500C12 1 19 1 24 4c3 6 4 14 3 21-7 2-17 2-25.500 0C2.500 18 4 9 7 3.500z"/><path d="M12 2.200C10.500 9 9.500 18 9.500 26M17 2c0 8 0 17 .500 24.500M21.500 3c1.500 7 2 15 1.500 23M5 10c6.500-1.500 15-1.500 21.500.5M3 18c7.500-1.500 17-1.500 24.500 0"/></g></svg>
<svg style="position:absolute;left:113px;top:945px;" width="28" height="28" viewBox="0 0 28 28" fill="none"><path d="M13 1.500C19 1 24.500 4 26 10c1 5-1.500 8-5.500 9.500-3 1-3.500 3-4.500 5.500-1.500 2.500-5 2.500-8 .500C3 22 1 17.500 1.500 12.500 2 6.500 7 2 13 1.500z" fill="#dcdcdc"/><path d="M22 3.200L14 6.500l6 1.200z M0 13.800l11-2.600-9.500 5.600z" fill="#323232"/></svg>
<div style="position:absolute;left:0px;top:1508px;width:2880px;height:38px;background:#414141;"></div>
<div style="position:absolute;left:0px;top:1507px;width:2880px;height:2px;background:#1a1a1a;"></div>
<svg style="position:absolute;left:10px;top:1520px;" width="18" height="20" viewBox="0 0 18 20" fill="none"><path d="M2 1v18" stroke="#8d8d8d" stroke-width="2"/><path d="M16.500 1.500v17L4.500 10z" fill="#8d8d8d"/></svg>
<svg style="position:absolute;left:37px;top:1520px;" width="16" height="20" viewBox="0 0 16 20" fill="none"><path d="M14.500 1.500v17L1.500 10z" fill="#8d8d8d"/></svg>
<svg style="position:absolute;left:184px;top:1520px;" width="16" height="20" viewBox="0 0 16 20" fill="none"><path d="M1.500 1.500v17L14.500 10z" fill="#e0e0e0"/></svg>
<svg style="position:absolute;left:209px;top:1520px;" width="18" height="20" viewBox="0 0 18 20" fill="none"><path d="M16 1v18" stroke="#8d8d8d" stroke-width="2"/><path d="M1.500 1.500v17L13.500 10z" fill="#8d8d8d"/></svg>
<svg style="position:absolute;left:238px;top:1518px;" width="22" height="24" viewBox="0 0 22 24" fill="none"><g stroke="#8d8d8d" stroke-width="1.500"><path d="M2 2h15v17H2z"/><path d="M19.500 4.500v17h-15" /><path d="M4.500 5.500h10M4.500 8.500h10M4.500 11.500h10M4.500 14.500h10" stroke-width="1.600"/></g></svg>
<svg style="position:absolute;left:267px;top:1517px;" width="24" height="26" viewBox="0 0 24 26" fill="none"><g stroke="#cfcfcf" stroke-width="1.700"><rect x="2" y="2" width="14" height="16" rx="2"/><path d="M5 6h8M5 9.500h8"/><rect x="7" y="8" width="14" height="16" rx="2" stroke="#8d8d8d"/></g></svg>
<span style="position:absolute;left:97.0px;top:1517.5px;line-height:24px;font-size:17.08px;color:#e6e6e6;font-weight:400;font-family:'Liberation Sans','DejaVu Sans',sans-serif;white-space:pre;letter-spacing:-0.478px;">1 из 1</span>
<span style="position:absolute;left:321.0px;top:1517.5px;line-height:24px;font-size:18.5px;color:#f0f0f0;font-weight:700;font-family:'Liberation Sans','DejaVu Sans',sans-serif;white-space:pre;letter-spacing:-0.395px;">Перетащить</span>
<span style="position:absolute;left:434.0px;top:1517.5px;line-height:24px;font-size:18.5px;color:#b4b4b4;font-weight:400;font-family:'Liberation Sans','DejaVu Sans',sans-serif;white-space:pre;letter-spacing:-0.345px;">to marquee select.</span>
<span style="position:absolute;left:585.7px;top:1517.5px;line-height:24px;font-size:18.5px;color:#f0f0f0;font-weight:700;font-family:'Liberation Sans','DejaVu Sans',sans-serif;white-space:pre;letter-spacing:-0.470px;">Щелкнуть</span>
<span style="position:absolute;left:679.6px;top:1517.5px;line-height:24px;font-size:18.5px;color:#b4b4b4;font-weight:400;font-family:'Liberation Sans','DejaVu Sans',sans-serif;white-space:pre;letter-spacing:-0.198px;">an object to select it.</span>
<span style="position:absolute;left:849.0px;top:1517.5px;line-height:24px;font-size:18.5px;color:#f0f0f0;font-weight:700;font-family:'Liberation Sans','DejaVu Sans',sans-serif;white-space:pre;letter-spacing:-0.163px;">Щелчок правой кнопкой</span>
<span style="position:absolute;left:1075.7px;top:1517.5px;line-height:24px;font-size:18.5px;color:#b4b4b4;font-weight:400;font-family:'Liberation Sans','DejaVu Sans',sans-serif;white-space:pre;letter-spacing:-0.185px;">during marquee select to toggle intersection behaviour.</span>
<div style="position:absolute;left:0px;top:179px;width:2px;height:1329px;background:#1a1a1a;"></div>
<div style="position:absolute;left:2px;top:179px;width:60px;height:1329px;background:#404040;"></div>
<div style="position:absolute;left:62px;top:179px;width:3px;height:1329px;background:#1f1f1f;"></div>
<div style="position:absolute;left:6.5px;top:187px;width:47.5px;height:47.5px;background:#1c1c1c;border-radius:11px;border:1.500px solid #5e5e5e;box-sizing:border-box;"></div>
<svg style="position:absolute;left:15px;top:195.0px;" width="28" height="28" viewBox="0 0 28 28" fill="none"><path d="M7 2.500v20l5.200-4.800 3.600 8 3.400-1.500-3.600-7.900 7-.5z" stroke="#dcdcdc" stroke-width="2" stroke-linejoin="round"/></svg>
<svg style="position:absolute;left:39px;top:218.5px;" width="9" height="9" viewBox="0 0 9 9" fill="none"><path d="M8 1v7H1" stroke="#dcdcdc" stroke-width="1.600"/></svg>
<svg style="position:absolute;left:15px;top:250.0px;" width="28" height="28" viewBox="0 0 28 28" fill="none"><g stroke="#dcdcdc" stroke-width="2.400"><path d="M2 24L25 3"/><path d="M7 1v11M1.500 6.500h11"/><path d="M21 16v11M15.500 21.500h11"/></g></svg>
<svg style="position:absolute;left:15px;top:305.0px;" width="28" height="28" viewBox="0 0 28 28" fill="none"><g stroke="#dcdcdc" stroke-width="1.800"><rect x="1.500" y="1.500" width="25" height="25" rx="6" stroke-dasharray="4 2.600"/><ellipse cx="14" cy="9.500" rx="8.500" ry="3.500"/><path d="M5.500 9.500v9c0 2 3.800 3.500 8.500 3.500s8.500-1.500 8.500-3.500v-9"/></g></svg>
<svg style="position:absolute;left:39px;top:328.5px;" width="9" height="9" viewBox="0 0 9 9" fill="none"><path d="M8 1v7H1" stroke="#dcdcdc" stroke-width="1.600"/></svg>
<svg style="position:absolute;left:15px;top:360.0px;" width="28" height="28" viewBox="0 0 28 28" fill="none"><rect x="2" y="2" width="24" height="24" stroke="#dcdcdc" stroke-width="2" stroke-dasharray="5.500 3.700" stroke-dashoffset="2.700"/></svg>
<svg style="position:absolute;left:39px;top:383.5px;" width="9" height="9" viewBox="0 0 9 9" fill="none"><path d="M8 1v7H1" stroke="#dcdcdc" stroke-width="1.600"/></svg>
<svg style="position:absolute;left:15px;top:415.0px;" width="28" height="28" viewBox="0 0 28 28" fill="none"><defs><linearGradient id="gg" x1="0" y1="0" x2="1" y2="1"><stop offset="0" stop-color="#e8e8e8"/><stop offset="1" stop-color="#e8e8e8" stop-opacity="0.150"/></linearGradient></defs><path d="M1 14L12 2l6 5L6 20z" fill="url(#gg)"/><path d="M12 21L22 9.500l5 5L17 26z" fill="url(#gg)"/><path d="M5 23L23.500 4.500" stroke="#dcdcdc" stroke-width="2"/><circle cx="3.800" cy="24.200" r="2.500" stroke="#dcdcdc" stroke-width="1.800" fill="#404040"/><circle cx="24.500" cy="3.800" r="2.500" stroke="#dcdcdc" stroke-width="1.800" fill="#404040"/></svg>
<svg style="position:absolute;left:39px;top:438.5px;" width="9" height="9" viewBox="0 0 9 9" fill="none"><path d="M8 1v7H1" stroke="#dcdcdc" stroke-width="1.600"/></svg>
<svg style="position:absolute;left:15px;top:470.0px;" width="28" height="28" viewBox="0 0 28 28" fill="none"><g stroke="#dcdcdc" stroke-width="2" stroke-linejoin="round"><path d="M14 12l8-8.500c1.500-1.500 3.500-1.300 4.500 0s1 3-.5 4.500l-9 8z"/><path d="M12.500 12.500c-4 0-7 3-8 7.500L2 26c5.500.5 10.500-.5 13-3 2-2 2.500-5 1.500-7z"/></g></svg>
<svg style="position:absolute;left:39px;top:493.5px;" width="9" height="9" viewBox="0 0 9 9" fill="none"><path d="M8 1v7H1" stroke="#dcdcdc" stroke-width="1.600"/></svg>
<svg style="position:absolute;left:15px;top:525.0px;" width="28" height="28" viewBox="0 0 28 28" fill="none"><g stroke="#dcdcdc" stroke-width="2" stroke-linecap="round"><path d="M3 17L17 3.500c2-2 5-2 7 0s2 4.500 0 6.500L15 19H5c-2 0-3-1-2-2z"/><path d="M8 17.500L21 5"/><path d="M2.500 24.500h4.500M10.500 24.500h5.500M19.500 24.500h1.500M24.500 24.500h.5" stroke-width="2.600"/></g></svg>
<svg style="position:absolute;left:39px;top:548.5px;" width="9" height="9" viewBox="0 0 9 9" fill="none"><path d="M8 1v7H1" stroke="#dcdcdc" stroke-width="1.600"/></svg>
<svg style="position:absolute;left:15px;top:580.0px;" width="28" height="28" viewBox="0 0 28 28" fill="none"><g stroke="#dcdcdc" stroke-width="2" stroke-linejoin="round"><circle cx="6.500" cy="6.500" r="4.700"/><path d="M3.200 9.800A4.700 4.700 0 0 0 9.800 3.200z" fill="#dcdcdc"/><path d="M17 14L27 2.500M21.500 18.500L27 13"/><path d="M16.500 13.500c-3.500-1-6.500 1.500-7.500 6L8 26c5 .5 9-1 11-3.500 1.500-2 2-4.500 1-6.500z"/></g></svg>
<svg style="position:absolute;left:39px;top:603.5px;" width="9" height="9" viewBox="0 0 9 9" fill="none"><path d="M8 1v7H1" stroke="#dcdcdc" stroke-width="1.600"/></svg>
<svg style="position:absolute;left:15px;top:635.0px;" width="28" height="28" viewBox="0 0 28 28" fill="none"><g stroke="#dcdcdc" stroke-width="2" stroke-linejoin="round"><path d="M1.500 1.500h10L8.500 7l3 5.500h-10L4.500 7z" fill="#dcdcdc" stroke="none"/><path d="M17 14L27 2.500M21.500 18.500L27 13"/><path d="M16.500 13.500c-3.500-1-6.500 1.500-7.500 6L8 26c5 .5 9-1 11-3.500 1.500-2 2-4.500 1-6.500z"/></g></svg>
<svg style="position:absolute;left:39px;top:658.5px;" width="9" height="9" viewBox="0 0 9 9" fill="none"><path d="M8 1v7H1" stroke="#dcdcdc" stroke-width="1.600"/></svg>
<svg style="position:absolute;left:15px;top:690.0px;" width="28" height="28" viewBox="0 0 28 28" fill="none"><g stroke="#dcdcdc" stroke-width="2" stroke-linejoin="round"><path d="M10.500 15.500c1-3-2-5-2-8.500 0-3 2.500-5 5.500-5s5.500 2 5.500 5c0 3.500-3 5.500-2 8.500"/><path d="M6 15.500h16c2.500 0 4.500 2 4.500 4.500v.5h-25v-.5c0-2.500 2-4.500 4.500-4.500z"/><path d="M4 20.500v3c0 1.500 1 2.500 2.500 2.500h15c1.500 0 2.500-1 2.500-2.500v-3"/></g></svg>
<svg style="position:absolute;left:39px;top:713.5px;" width="9" height="9" viewBox="0 0 9 9" fill="none"><path d="M8 1v7H1" stroke="#dcdcdc" stroke-width="1.600"/></svg>
<svg style="position:absolute;left:15px;top:745.0px;" width="28" height="28" viewBox="0 0 28 28" fill="none"><g stroke="#dcdcdc" stroke-width="2" stroke-linejoin="round"><path d="M9 6.500C4.500 8.500 2 12.500 2 16.500 2 22 6.500 26 12.500 26c3 0 5.500-.5 7.500-1.500"/><path d="M16.500 11L23 2.500M20 14.500l6.500-6"/><path d="M15.500 10c-3-.5-5.500 1.500-6.500 5l-.5 5c4 .5 7.500-.5 9.500-3 1.500-2 1.500-4 .5-5.500z"/><path d="M17 20c3-2.500 8-1 8.500 2.500.3 2.500-2 4-5 3.500-2-.3-4.500-1-5.500-2z" fill="#dcdcdc" stroke="none"/></g></svg>
<svg style="position:absolute;left:39px;top:768.5px;" width="9" height="9" viewBox="0 0 9 9" fill="none"><path d="M8 1v7H1" stroke="#dcdcdc" stroke-width="1.600"/></svg>
<svg style="position:absolute;left:15px;top:800.0px;" width="28" height="28" viewBox="0 0 28 28" fill="none"><g stroke="#dcdcdc" stroke-width="2" stroke-linejoin="round"><path d="M16 4.500l5-3 6 7.500-4 4z"/><path d="M15.500 6.500L6 10.500 2 26l15.500-4.500 5-8.500"/><path d="M2.500 25.500L12 16"/><circle cx="12.500" cy="15.500" r="1.600" fill="#dcdcdc"/></g></svg>
<svg style="position:absolute;left:39px;top:823.5px;" width="9" height="9" viewBox="0 0 9 9" fill="none"><path d="M8 1v7H1" stroke="#dcdcdc" stroke-width="1.600"/></svg>
<svg style="position:absolute;left:15px;top:855.0px;" width="28" height="28" viewBox="0 0 28 28" fill="none"><rect x="3" y="2" width="22" height="22" fill="#262b2e" stroke="#dcdcdc" stroke-width="2"/></svg>
<svg style="position:absolute;left:39px;top:878.5px;" width="9" height="9" viewBox="0 0 9 9" fill="none"><path d="M8 1v7H1" stroke="#dcdcdc" stroke-width="1.600"/></svg>
<svg style="position:absolute;left:15px;top:910.0px;" width="28" height="28" viewBox="0 0 28 28" fill="none"><g stroke="#dcdcdc" stroke-width="2.400"><path d="M5 5h19M14.500 5v19"/><path d="M10.500 24.500h8"/></g><g fill="#dcdcdc"><rect x="1" y="1" width="4.500" height="4.500"/><rect x="23.500" y="1" width="4.500" height="4.500"/><rect x="1" y="11" width="4.500" height="4.500" /><rect x="23.500" y="11" width="4.500" height="4.500"/><rect x="8" y="22.500" width="4.500" height="4.500"/><rect x="17" y="22.500" width="4.500" height="4.500"/></g></svg>
<svg style="position:absolute;left:39px;top:933.5px;" width="9" height="9" viewBox="0 0 9 9" fill="none"><path d="M8 1v7H1" stroke="#dcdcdc" stroke-width="1.600"/></svg>
<svg style="position:absolute;left:15px;top:965.0px;" width="28" height="28" viewBox="0 0 28 28" fill="none"><g stroke="#dcdcdc" stroke-width="2" stroke-linejoin="round"><path d="M15 8.500L4 19.500c-1.500 1.500-2.500 4-1.500 5.500s3.500.5 5.500-1.500L19 12.500"/><path d="M6 20.500L15 11.500" stroke-width="1.600"/><path d="M13 6l2.500-2.500 2 1.500 3-3c1.500-1.500 4-1.500 5.500 0s1.500 4 0 5.500l-3 3 1.500 2-2.500 2.500z"/></g></svg>
<svg style="position:absolute;left:39px;top:988.5px;" width="9" height="9" viewBox="0 0 9 9" fill="none"><path d="M8 1v7H1" stroke="#dcdcdc" stroke-width="1.600"/></svg>
<div style="position:absolute;left:11px;top:1016.5px;width:41px;height:2px;background:#1e1e1e;"></div>
<svg style="position:absolute;left:15px;top:1040px;" width="28" height="28" viewBox="0 0 28 28" fill="none"><g stroke="#dcdcdc" stroke-width="2" stroke-linejoin="round" stroke-linecap="round"><path d="M9.500 14V6c0-2.500 3.500-2.500 3.500 0v6.500V3.500c0-2.500 3.500-2.500 3.500 0v9V5c0-2.500 3.500-2.500 3.500 0v8.500V8.500c0-2.500 3.500-2.500 3.500 0V17c0 6-3.500 9.500-8.500 9.500-4.500 0-6.500-2-9-6L2.500 15c-1-2 1.500-3.500 3-2l4 5"/></g></svg>
<svg style="position:absolute;left:15px;top:1095px;" width="28" height="28" viewBox="0 0 28 28" fill="none"><g stroke="#dcdcdc" stroke-width="2" stroke-linejoin="round"><circle cx="18" cy="10.500" r="8.500"/><path d="M17.500 5.500a5 5 0 0 1 5 5" stroke-width="1.600"/><path d="M11.500 15.500L3 23c-1.500 1.500 1 4.500 3 3l8.500-8"/></g></svg>
<div style="position:absolute;left:2px;top:1140px;width:58px;height:27px;background:#4d4d4d;border-radius:6px;"></div>
<div style="position:absolute;left:15.0px;top:1150px;width:7px;height:7px;background:#e2e2e2;border-radius:50%;"></div>
<div style="position:absolute;left:26.5px;top:1150px;width:7px;height:7px;background:#e2e2e2;border-radius:50%;"></div>
<div style="position:absolute;left:38.0px;top:1150px;width:7px;height:7px;background:#e2e2e2;border-radius:50%;"></div>
<div style="position:absolute;left:12.5px;top:1219px;width:37px;height:37px;background:#ececec;border-radius:50%;border:1.500px solid #555;box-sizing:border-box;"></div>
<div style="position:absolute;left:11px;top:1198px;width:40px;height:40px;background:#000;border-radius:50%;border:2px solid #4e4e4e;box-sizing:border-box;"></div>
<svg style="position:absolute;left:20px;top:1258px;" width="22" height="14" viewBox="0 0 22 14" fill="none"><path d="M3 4c1.500 6 14.500 6 16 0" stroke="#bdbdbd" stroke-width="1.500"/><path d="M.800 6.500L3 3l3 2.500M16 5.500L19 3l2.200 3.500" stroke="#bdbdbd" stroke-width="1.500"/></svg>
<div style="position:absolute;left:2485px;top:178px;width:395px;height:45px;background:#1e1e1e;"></div>
<div style="position:absolute;left:2485px;top:223px;width:395px;height:353px;background:#363636;"></div>
<div style="position:absolute;left:2495px;top:186.3px;width:8px;height:30px;background:#3a3a3a;border-radius:4px;"></div>
<span style="position:absolute;left:2520.0px;top:188.5px;line-height:24px;font-size:17.72px;color:#c8c8c8;font-weight:400;font-family:'Liberation Sans','DejaVu Sans',sans-serif;white-space:pre;letter-spacing:-0.496px;">Histogram</span>
<div style="position:absolute;left:2605px;top:184.3px;width:62px;height:31.6px;background:#363636;border-radius:7px;"></div>
<span style="position:absolute;left:2610.8px;top:188.5px;line-height:24px;font-size:17.64px;color:#f4f4f4;font-weight:400;font-family:'Liberation Sans','DejaVu Sans',sans-serif;white-space:pre;letter-spacing:-0.494px;">Colour</span>
<div style="position:absolute;left:2852px;top:188.7px;width:24px;height:23px;background:none;border:1.500px solid #8a8a8a;border-radius:5px;"></div><svg style="position:absolute;left:2852px;top:188.7px;" width="24" height="23" viewBox="0 0 24 23" fill="none"><path d="M6.0 6.5l6 10 6-10" stroke="#f0f0f0" stroke-width="2.200"/></svg>
<svg style="position:absolute;left:0;top:0" width="2880" height="620" viewBox="0 0 2880 620" fill="none"><path d="M2795.00 387.50 L2794.80 394.18 L2773.84 392.92 L2774.00 387.50Z" fill="hsl(1.5,100%,50%)"/><path d="M2794.85 393.31 L2794.30 399.97 L2773.43 397.61 L2773.88 392.21Z" fill="hsl(4.5,100%,50%)"/><path d="M2794.39 399.10 L2793.49 405.72 L2772.78 402.28 L2773.51 396.91Z" fill="hsl(7.5,100%,50%)"/><path d="M2793.63 404.86 L2792.39 411.43 L2771.88 406.90 L2772.89 401.58Z" fill="hsl(10.5,100%,50%)"/><path d="M2792.57 410.58 L2790.99 417.07 L2770.75 411.48 L2772.03 406.21Z" fill="hsl(13.5,100%,50%)"/><path d="M2791.22 416.23 L2789.29 422.63 L2769.37 415.98 L2770.93 410.79Z" fill="hsl(16.5,100%,50%)"/><path d="M2789.57 421.80 L2787.31 428.09 L2767.77 420.41 L2769.60 415.31Z" fill="hsl(19.5,100%,50%)"/><path d="M2787.63 427.28 L2785.05 433.44 L2765.93 424.75 L2768.02 419.75Z" fill="hsl(22.5,100%,50%)"/><path d="M2785.40 432.65 L2782.50 438.67 L2763.87 428.99 L2766.22 424.11Z" fill="hsl(25.5,100%,50%)"/><path d="M2782.90 437.89 L2779.69 443.75 L2761.59 433.11 L2764.19 428.36Z" fill="hsl(28.5,100%,50%)"/><path d="M2780.13 443.00 L2776.61 448.68 L2759.09 437.11 L2761.94 432.50Z" fill="hsl(31.5,100%,50%)"/><path d="M2777.09 447.95 L2773.29 453.45 L2756.39 440.97 L2759.48 436.52Z" fill="hsl(34.5,100%,50%)"/><path d="M2773.80 452.74 L2769.71 458.03 L2753.50 444.69 L2756.81 440.40Z" fill="hsl(37.5,100%,50%)"/><path d="M2770.26 457.35 L2765.90 462.42 L2750.41 448.25 L2753.94 444.14Z" fill="hsl(40.5,100%,50%)"/><path d="M2766.49 461.77 L2761.87 466.60 L2747.14 451.64 L2750.88 447.72Z" fill="hsl(43.5,100%,50%)"/><path d="M2762.49 465.99 L2757.62 470.57 L2743.69 454.85 L2747.64 451.14Z" fill="hsl(46.5,100%,50%)"/><path d="M2758.27 469.99 L2753.17 474.31 L2740.09 457.89 L2744.22 454.38Z" fill="hsl(49.5,100%,50%)"/><path d="M2753.85 473.76 L2748.54 477.81 L2736.33 460.72 L2740.64 457.44Z" fill="hsl(52.5,100%,50%)"/><path d="M2749.24 477.30 L2743.72 481.06 L2732.42 463.36 L2736.90 460.31Z" fill="hsl(55.5,100%,50%)"/><path d="M2744.45 480.59 L2738.74 484.06 L2728.39 465.79 L2733.02 462.98Z" fill="hsl(58.5,100%,50%)"/><path d="M2739.50 483.63 L2733.61 486.79 L2724.23 468.01 L2729.00 465.44Z" fill="hsl(61.5,100%,50%)"/><path d="M2734.39 486.40 L2728.35 489.26 L2719.96 470.00 L2724.86 467.69Z" fill="hsl(64.5,100%,50%)"/><path d="M2729.15 488.90 L2722.96 491.44 L2715.59 471.77 L2720.61 469.72Z" fill="hsl(67.5,100%,50%)"/><path d="M2723.78 491.13 L2717.47 493.33 L2711.14 473.31 L2716.25 471.52Z" fill="hsl(70.5,100%,50%)"/><path d="M2718.30 493.07 L2711.89 494.94 L2706.61 474.61 L2711.81 473.10Z" fill="hsl(73.5,100%,50%)"/><path d="M2712.73 494.72 L2706.22 496.25 L2702.02 475.68 L2707.29 474.43Z" fill="hsl(76.5,100%,50%)"/><path d="M2707.08 496.07 L2700.50 497.27 L2697.38 476.50 L2702.71 475.53Z" fill="hsl(79.5,100%,50%)"/><path d="M2701.36 497.13 L2694.74 497.98 L2692.70 477.08 L2698.08 476.39Z" fill="hsl(82.5,100%,50%)"/><path d="M2695.60 497.89 L2688.94 498.39 L2688.00 477.41 L2693.41 477.01Z" fill="hsl(85.5,100%,50%)"/><path d="M2689.81 498.35 L2683.13 498.50 L2683.29 477.50 L2688.71 477.38Z" fill="hsl(88.5,100%,50%)"/><path d="M2684.00 498.50 L2677.32 498.30 L2678.58 477.34 L2684.00 477.50Z" fill="hsl(91.5,100%,50%)"/><path d="M2678.19 498.35 L2671.53 497.80 L2673.89 476.93 L2679.29 477.38Z" fill="hsl(94.5,100%,50%)"/><path d="M2672.40 497.89 L2665.78 496.99 L2669.22 476.28 L2674.59 477.01Z" fill="hsl(97.5,100%,50%)"/><path d="M2666.64 497.13 L2660.07 495.89 L2664.60 475.38 L2669.92 476.39Z" fill="hsl(100.5,100%,50%)"/><path d="M2660.92 496.07 L2654.43 494.49 L2660.02 474.25 L2665.29 475.53Z" fill="hsl(103.5,100%,50%)"/><path d="M2655.27 494.72 L2648.87 492.79 L2655.52 472.87 L2660.71 474.43Z" fill="hsl(106.5,100%,50%)"/><path d="M2649.70 493.07 L2643.41 490.81 L2651.09 471.27 L2656.19 473.10Z" fill="hsl(109.5,100%,50%)"/><path d="M2644.22 491.13 L2638.06 488.55 L2646.75 469.43 L2651.75 471.52Z" fill="hsl(112.5,100%,50%)"/><path d="M2638.85 488.90 L2632.83 486.00 L2642.51 467.37 L2647.39 469.72Z" fill="hsl(115.5,100%,50%)"/><path d="M2633.61 486.40 L2627.75 483.19 L2638.39 465.09 L2643.14 467.69Z" fill="hsl(118.5,100%,50%)"/><path d="M2628.50 483.63 L2622.82 480.11 L2634.39 462.59 L2639.00 465.44Z" fill="hsl(121.5,100%,50%)"/><path d="M2623.55 480.59 L2618.05 476.79 L2630.53 459.89 L2634.98 462.98Z" fill="hsl(124.5,100%,50%)"/><path d="M2618.76 477.30 L2613.47 473.21 L2626.81 457.00 L2631.10 460.31Z" fill="hsl(127.5,100%,50%)"/><path d="M2614.15 473.76 L2609.08 469.40 L2623.25 453.91 L2627.36 457.44Z" fill="hsl(130.5,100%,50%)"/><path d="M2609.73 469.99 L2604.90 465.37 L2619.86 450.64 L2623.78 454.38Z" fill="hsl(133.5,100%,50%)"/><path d="M2605.51 465.99 L2600.93 461.12 L2616.65 447.19 L2620.36 451.14Z" fill="hsl(136.5,100%,50%)"/><path d="M2601.51 461.77 L2597.19 456.67 L2613.61 443.59 L2617.12 447.72Z" fill="hsl(139.5,100%,50%)"/><path d="M2597.74 457.35 L2593.69 452.04 L2610.78 439.83 L2614.06 444.14Z" fill="hsl(142.5,100%,50%)"/><path d="M2594.20 452.74 L2590.44 447.22 L2608.14 435.92 L2611.19 440.40Z" fill="hsl(145.5,100%,50%)"/><path d="M2590.91 447.95 L2587.44 442.24 L2605.71 431.89 L2608.52 436.52Z" fill="hsl(148.5,100%,50%)"/><path d="M2587.87 443.00 L2584.71 437.11 L2603.49 427.73 L2606.06 432.50Z" fill="hsl(151.5,100%,50%)"/><path d="M2585.10 437.89 L2582.24 431.85 L2601.50 423.46 L2603.81 428.36Z" fill="hsl(154.5,100%,50%)"/><path d="M2582.60 432.65 L2580.06 426.46 L2599.73 419.09 L2601.78 424.11Z" fill="hsl(157.5,100%,50%)"/><path d="M2580.37 427.28 L2578.17 420.97 L2598.19 414.64 L2599.98 419.75Z" fill="hsl(160.5,100%,50%)"/><path d="M2578.43 421.80 L2576.56 415.39 L2596.89 410.11 L2598.40 415.31Z" fill="hsl(163.5,100%,50%)"/><path d="M2576.78 416.23 L2575.25 409.72 L2595.82 405.52 L2597.07 410.79Z" fill="hsl(166.5,100%,50%)"/><path d="M2575.43 410.58 L2574.23 404.00 L2595.00 400.88 L2595.97 406.21Z" fill="hsl(169.5,100%,50%)"/><path d="M2574.37 404.86 L2573.52 398.24 L2594.42 396.20 L2595.11 401.58Z" fill="hsl(172.5,100%,50%)"/><path d="M2573.61 399.10 L2573.11 392.44 L2594.09 391.50 L2594.49 396.91Z" fill="hsl(175.5,100%,50%)"/><path d="M2573.15 393.31 L2573.00 386.63 L2594.00 386.79 L2594.12 392.21Z" fill="hsl(178.5,100%,50%)"/><path d="M2573.00 387.50 L2573.20 380.82 L2594.16 382.08 L2594.00 387.50Z" fill="hsl(181.5,100%,50%)"/><path d="M2573.15 381.69 L2573.70 375.03 L2594.57 377.39 L2594.12 382.79Z" fill="hsl(184.5,100%,50%)"/><path d="M2573.61 375.90 L2574.51 369.28 L2595.22 372.72 L2594.49 378.09Z" fill="hsl(187.5,100%,50%)"/><path d="M2574.37 370.14 L2575.61 363.57 L2596.12 368.10 L2595.11 373.42Z" fill="hsl(190.5,100%,50%)"/><path d="M2575.43 364.42 L2577.01 357.93 L2597.25 363.52 L2595.97 368.79Z" fill="hsl(193.5,100%,50%)"/><path d="M2576.78 358.77 L2578.71 352.37 L2598.63 359.02 L2597.07 364.21Z" fill="hsl(196.5,100%,50%)"/><path d="M2578.43 353.20 L2580.69 346.91 L2600.23 354.59 L2598.40 359.69Z" fill="hsl(199.5,100%,50%)"/><path d="M2580.37 347.72 L2582.95 341.56 L2602.07 350.25 L2599.98 355.25Z" fill="hsl(202.5,100%,50%)"/><path d="M2582.60 342.35 L2585.50 336.33 L2604.13 346.01 L2601.78 350.89Z" fill="hsl(205.5,100%,50%)"/><path d="M2585.10 337.11 L2588.31 331.25 L2606.41 341.89 L2603.81 346.64Z" fill="hsl(208.5,100%,50%)"/><path d="M2587.87 332.00 L2591.39 326.32 L2608.91 337.89 L2606.06 342.50Z" fill="hsl(211.5,100%,50%)"/><path d="M2590.91 327.05 L2594.71 321.55 L2611.61 334.03 L2608.52 338.48Z" fill="hsl(214.5,100%,50%)"/><path d="M2594.20 322.26 L2598.29 316.97 L2614.50 330.31 L2611.19 334.60Z" fill="hsl(217.5,100%,50%)"/><path d="M2597.74 317.65 L2602.10 312.58 L2617.59 326.75 L2614.06 330.86Z" fill="hsl(220.5,100%,50%)"/><path d="M2601.51 313.23 L2606.13 308.40 L2620.86 323.36 L2617.12 327.28Z" fill="hsl(223.5,100%,50%)"/><path d="M2605.51 309.01 L2610.38 304.43 L2624.31 320.15 L2620.36 323.86Z" fill="hsl(226.5,100%,50%)"/><path d="M2609.73 305.01 L2614.83 300.69 L2627.91 317.11 L2623.78 320.62Z" fill="hsl(229.5,100%,50%)"/><path d="M2614.15 301.24 L2619.46 297.19 L2631.67 314.28 L2627.36 317.56Z" fill="hsl(232.5,100%,50%)"/><path d="M2618.76 297.70 L2624.28 293.94 L2635.58 311.64 L2631.10 314.69Z" fill="hsl(235.5,100%,50%)"/><path d="M2623.55 294.41 L2629.26 290.94 L2639.61 309.21 L2634.98 312.02Z" fill="hsl(238.5,100%,50%)"/><path d="M2628.50 291.37 L2634.39 288.21 L2643.77 306.99 L2639.00 309.56Z" fill="hsl(241.5,100%,50%)"/><path d="M2633.61 288.60 L2639.65 285.74 L2648.04 305.00 L2643.14 307.31Z" fill="hsl(244.5,100%,50%)"/><path d="M2638.85 286.10 L2645.04 283.56 L2652.41 303.23 L2647.39 305.28Z" fill="hsl(247.5,100%,50%)"/><path d="M2644.22 283.87 L2650.53 281.67 L2656.86 301.69 L2651.75 303.48Z" fill="hsl(250.5,100%,50%)"/><path d="M2649.70 281.93 L2656.11 280.06 L2661.39 300.39 L2656.19 301.90Z" fill="hsl(253.5,100%,50%)"/><path d="M2655.27 280.28 L2661.78 278.75 L2665.98 299.32 L2660.71 300.57Z" fill="hsl(256.5,100%,50%)"/><path d="M2660.92 278.93 L2667.50 277.73 L2670.62 298.50 L2665.29 299.47Z" fill="hsl(259.5,100%,50%)"/><path d="M2666.64 277.87 L2673.26 277.02 L2675.30 297.92 L2669.92 298.61Z" fill="hsl(262.5,100%,50%)"/><path d="M2672.40 277.11 L2679.06 276.61 L2680.00 297.59 L2674.59 297.99Z" fill="hsl(265.5,100%,50%)"/><path d="M2678.19 276.65 L2684.87 276.50 L2684.71 297.50 L2679.29 297.62Z" fill="hsl(268.5,100%,50%)"/><path d="M2684.00 276.50 L2690.68 276.70 L2689.42 297.66 L2684.00 297.50Z" fill="hsl(271.5,100%,50%)"/><path d="M2689.81 276.65 L2696.47 277.20 L2694.11 298.07 L2688.71 297.62Z" fill="hsl(274.5,100%,50%)"/><path d="M2695.60 277.11 L2702.22 278.01 L2698.78 298.72 L2693.41 297.99Z" fill="hsl(277.5,100%,50%)"/><path d="M2701.36 277.87 L2707.93 279.11 L2703.40 299.62 L2698.08 298.61Z" fill="hsl(280.5,100%,50%)"/><path d="M2707.08 278.93 L2713.57 280.51 L2707.98 300.75 L2702.71 299.47Z" fill="hsl(283.5,100%,50%)"/><path d="M2712.73 280.28 L2719.13 282.21 L2712.48 302.13 L2707.29 300.57Z" fill="hsl(286.5,100%,50%)"/><path d="M2718.30 281.93 L2724.59 284.19 L2716.91 303.73 L2711.81 301.90Z" fill="hsl(289.5,100%,50%)"/><path d="M2723.78 283.87 L2729.94 286.45 L2721.25 305.57 L2716.25 303.48Z" fill="hsl(292.5,100%,50%)"/><path d="M2729.15 286.10 L2735.17 289.00 L2725.49 307.63 L2720.61 305.28Z" fill="hsl(295.5,100%,50%)"/><path d="M2734.39 288.60 L2740.25 291.81 L2729.61 309.91 L2724.86 307.31Z" fill="hsl(298.5,100%,50%)"/><path d="M2739.50 291.37 L2745.18 294.89 L2733.61 312.41 L2729.00 309.56Z" fill="hsl(301.5,100%,50%)"/><path d="M2744.45 294.41 L2749.95 298.21 L2737.47 315.11 L2733.02 312.02Z" fill="hsl(304.5,100%,50%)"/><path d="M2749.24 297.70 L2754.53 301.79 L2741.19 318.00 L2736.90 314.69Z" fill="hsl(307.5,100%,50%)"/><path d="M2753.85 301.24 L2758.92 305.60 L2744.75 321.09 L2740.64 317.56Z" fill="hsl(310.5,100%,50%)"/><path d="M2758.27 305.01 L2763.10 309.63 L2748.14 324.36 L2744.22 320.62Z" fill="hsl(313.5,100%,50%)"/><path d="M2762.49 309.01 L2767.07 313.88 L2751.35 327.81 L2747.64 323.86Z" fill="hsl(316.5,100%,50%)"/><path d="M2766.49 313.23 L2770.81 318.33 L2754.39 331.41 L2750.88 327.28Z" fill="hsl(319.5,100%,50%)"/><path d="M2770.26 317.65 L2774.31 322.96 L2757.22 335.17 L2753.94 330.86Z" fill="hsl(322.5,100%,50%)"/><path d="M2773.80 322.26 L2777.56 327.78 L2759.86 339.08 L2756.81 334.60Z" fill="hsl(325.5,100%,50%)"/><path d="M2777.09 327.05 L2780.56 332.76 L2762.29 343.11 L2759.48 338.48Z" fill="hsl(328.5,100%,50%)"/><path d="M2780.13 332.00 L2783.29 337.89 L2764.51 347.27 L2761.94 342.50Z" fill="hsl(331.5,100%,50%)"/><path d="M2782.90 337.11 L2785.76 343.15 L2766.50 351.54 L2764.19 346.64Z" fill="hsl(334.5,100%,50%)"/><path d="M2785.40 342.35 L2787.94 348.54 L2768.27 355.91 L2766.22 350.89Z" fill="hsl(337.5,100%,50%)"/><path d="M2787.63 347.72 L2789.83 354.03 L2769.81 360.36 L2768.02 355.25Z" fill="hsl(340.5,100%,50%)"/><path d="M2789.57 353.20 L2791.44 359.61 L2771.11 364.89 L2769.60 359.69Z" fill="hsl(343.5,100%,50%)"/><path d="M2791.22 358.77 L2792.75 365.28 L2772.18 369.48 L2770.93 364.21Z" fill="hsl(346.5,100%,50%)"/><path d="M2792.57 364.42 L2793.77 371.00 L2773.00 374.12 L2772.03 368.79Z" fill="hsl(349.5,100%,50%)"/><path d="M2793.63 370.14 L2794.48 376.76 L2773.58 378.80 L2772.89 373.42Z" fill="hsl(352.5,100%,50%)"/><path d="M2794.39 375.90 L2794.89 382.56 L2773.91 383.50 L2773.51 378.09Z" fill="hsl(355.5,100%,50%)"/><path d="M2794.85 381.69 L2795.00 388.37 L2774.00 388.21 L2773.88 382.79Z" fill="hsl(358.5,100%,50%)"/><defs><linearGradient id="tg1" x1="2639" y1="309.500" x2="2639" y2="465.500" gradientUnits="userSpaceOnUse"><stop offset="0" stop-color="#000"/><stop offset="1" stop-color="#fff"/></linearGradient><linearGradient id="tg2" x1="2774" y1="387.500" x2="2639" y2="387.500" gradientUnits="userSpaceOnUse"><stop offset="0" stop-color="#ff0000"/><stop offset="1" stop-color="#ff0000" stop-opacity="0"/></linearGradient></defs><path d="M2639 309.500L2774 387.500L2639 465.500Z" fill="url(#tg1)"/><path d="M2639 309.500L2774 387.500L2639 465.500Z" fill="url(#tg2)"/><circle cx="2785.800" cy="388" r="7.500" fill="#ff0000" stroke="#fff" stroke-width="2.600"/><circle cx="2638.700" cy="453.700" r="7.500" fill="#e0e0e0" stroke="#fff" stroke-width="2"/><circle cx="2638.700" cy="453.700" r="8.500" stroke="#555" stroke-width="1"/></svg>
<div style="position:absolute;left:2527.8px;top:269.7px;width:35px;height:35px;background:#ececec;border-radius:50%;border:1.500px solid #2a2a2a;"></div>
<div style="position:absolute;left:2505.9px;top:247.9px;width:40px;height:40px;background:#000;border-radius:50%;border:2px solid #2c2c2c;"></div>
<div style="position:absolute;left:2508.2px;top:287.2px;width:17px;height:17px;background:#f0f0f0;border-radius:50%;"></div>
<svg style="position:absolute;left:2508.2px;top:287.2px;" width="17" height="17" viewBox="0 0 17 17" fill="none"><path d="M3 14L14 3" stroke="#e8203a" stroke-width="2.200"/></svg>
<svg style="position:absolute;left:2543px;top:244px;" width="24" height="24" viewBox="0 0 24 24" fill="none"><path d="M3 8c5-6 13-3 16 8" stroke="#bbb" stroke-width="1.500"/><path d="M2.500 2.500V9h6M14.500 14.500l4.500 2 2.500-5" stroke="#bbb" stroke-width="1.500"/></svg>
<svg style="position:absolute;left:2576px;top:245px;" width="30" height="30" viewBox="0 0 30 30" fill="none"><g stroke="#e4e4e4" stroke-width="2" stroke-linejoin="round"><path d="M16 9L4.500 20.500c-1.500 1.500-2.500 4-1.500 5.500s3.500.5 5.500-1.500L20 13"/><path d="M14 6.500l2.500-2.500 2 1.500 3-3c1.500-1.500 4-1.500 5.500 0s1.500 4 0 5.500l-3 3 1.500 2-2.500 2.500z"/></g></svg>
<div style="position:absolute;left:2608px;top:248.5px;width:23px;height:23px;background:#ff0000;border-radius:50%;border:1.500px solid #2a2a2a;"></div>
<div style="position:absolute;left:2825px;top:264.5px;width:43px;height:22px;background:#000;"></div>
<div style="position:absolute;left:2847px;top:266px;width:19.5px;height:19px;background:#fff;"></div>
<span style="position:absolute;left:2500.4px;top:448.5px;line-height:21px;font-size:14.87px;color:#b4b4b4;font-weight:400;font-family:'Liberation Sans','DejaVu Sans',sans-serif;white-space:pre;letter-spacing:-0.416px;">H: 0</span>
<span style="position:absolute;left:2502.8px;top:468.1px;line-height:21px;font-size:13.91px;color:#b4b4b4;font-weight:400;font-family:'Liberation Sans','DejaVu Sans',sans-serif;white-space:pre;letter-spacing:-0.390px;">S: 0</span>
<span style="position:absolute;left:2504.5px;top:488.1px;line-height:21px;font-size:14.01px;color:#b4b4b4;font-weight:400;font-family:'Liberation Sans','DejaVu Sans',sans-serif;white-space:pre;letter-spacing:-0.392px;">L: 92</span>
<span style="position:absolute;left:2778.0px;top:482.5px;line-height:21px;font-size:14.14px;color:#b4b4b4;font-weight:400;font-family:'Liberation Sans','DejaVu Sans',sans-serif;white-space:pre;letter-spacing:-0.396px;">#:</span>
<div style="position:absolute;left:2795px;top:479.2px;width:70.7px;height:26.5px;background:#252525;border-radius:3px;"></div>
<span style="position:absolute;left:2797.7px;top:481.5px;line-height:23px;font-size:13.74px;color:#f0f0f0;font-weight:400;font-family:'Liberation Sans','DejaVu Sans',sans-serif;white-space:pre;letter-spacing:-0.385px;">EBEBEB</span>
<span style="position:absolute;left:2508.9px;top:517.3px;line-height:21px;font-size:15.8px;color:#c4c4c4;font-weight:400;font-family:'Liberation Sans','DejaVu Sans',sans-serif;white-space:pre;letter-spacing:-0.443px;">Непрозрачность</span>
<div style="position:absolute;left:2516.5px;top:543px;width:22px;height:22px;background:#ececec;border-radius:50%;border:1.500px solid #2a2a2a;"></div>
<div style="position:absolute;left:2552px;top:549px;width:200px;height:14px;background:none;border-radius:7px;background:linear-gradient(90deg,#f4f4f4 0%,#cfcfcf 25%,#8c8c8c 55%,#4a4a4a 85%,#3a3a3a 100%);"></div>
<div style="position:absolute;left:2741.3px;top:547.5px;width:16.5px;height:16.5px;background:#363636;border-radius:50%;border:2.600px solid #f4f4f4;"></div>
<div style="position:absolute;left:2770.5px;top:538.7px;width:64px;height:26.5px;background:#252525;border-radius:3px 0 0 3px;"></div>
<span style="position:absolute;left:2779.0px;top:542.0px;line-height:23px;font-size:16.4px;color:#f0f0f0;font-weight:400;font-family:'Liberation Sans','DejaVu Sans',sans-serif;white-space:pre;letter-spacing:-0.459px;">100 %</span>
<div style="position:absolute;left:2834.5px;top:538.7px;width:23px;height:26.5px;background:#4c4c4c;border-radius:0 3px 3px 0;"></div>
<svg style="position:absolute;left:2838px;top:543.5px;" width="16" height="12" viewBox="0 0 16 12" fill="none"><path d="M3 3.5l5 5 5 -5" stroke="#e8e8e8" stroke-width="1.8"/></svg>
<div style="position:absolute;left:2485px;top:576px;width:395px;height:2px;background:#1a1a1a;"></div>
<div style="position:absolute;left:2485px;top:578px;width:395px;height:46px;background:#1e1e1e;"></div>
<div style="position:absolute;left:2495px;top:588px;width:8px;height:28px;background:#3a3a3a;border-radius:4px;"></div>
<div style="position:absolute;left:2514.4px;top:585.5px;width:58.5px;height:31px;background:#363636;border-radius:7px;"></div>
<span style="position:absolute;left:2520.0px;top:589.5px;line-height:24px;font-size:16.06px;color:#f4f4f4;font-weight:400;font-family:'Liberation Sans','DejaVu Sans',sans-serif;white-space:pre;letter-spacing:-0.450px;">Layers</span>
<span style="position:absolute;left:2581.2px;top:589.5px;line-height:24px;font-size:16.54px;color:#c8c8c8;font-weight:400;font-family:'Liberation Sans','DejaVu Sans',sans-serif;white-space:pre;letter-spacing:-0.463px;">Channels</span>
<span style="position:absolute;left:2662.4px;top:589.5px;line-height:24px;font-size:16.15px;color:#c8c8c8;font-weight:400;font-family:'Liberation Sans','DejaVu Sans',sans-serif;white-space:pre;letter-spacing:-0.452px;">Brushes</span>
<span style="position:absolute;left:2734.5px;top:589.5px;line-height:24px;font-size:16.47px;color:#c8c8c8;font-weight:400;font-family:'Liberation Sans','DejaVu Sans',sans-serif;white-space:pre;letter-spacing:-0.461px;">Stock</span>
<div style="position:absolute;left:2852px;top:590.3px;width:24px;height:22.5px;background:none;border:1.500px solid #8a8a8a;border-radius:5px;"></div><svg style="position:absolute;left:2852px;top:590.3px;" width="24" height="22.5" viewBox="0 0 24 22.5" fill="none"><path d="M6.0 6.25l6 10 6-10" stroke="#f0f0f0" stroke-width="2.200"/></svg>
<div style="position:absolute;left:2485px;top:624px;width:395px;height:52px;background:#3a3a3a;"></div>
<span style="position:absolute;left:2503.0px;top:638.5px;line-height:21px;font-size:15.72px;color:#969696;font-weight:400;font-family:'Liberation Sans','DejaVu Sans',sans-serif;white-space:pre;letter-spacing:-0.440px;">Непрозрачность:</span>
<div style="position:absolute;left:2630px;top:633.2px;width:82px;height:29.5px;background:#323232;border-radius:5px;"></div>
<span style="position:absolute;left:2640.0px;top:637.5px;line-height:23px;font-size:16.32px;color:#9a9a9a;font-weight:400;font-family:'Liberation Sans','DejaVu Sans',sans-serif;white-space:pre;letter-spacing:-0.457px;">100 %</span>
<svg style="position:absolute;left:2692px;top:641.5px;" width="16" height="12" viewBox="0 0 16 12" fill="none"><path d="M3 3.5l5 5 5 -5" stroke="#9a9a9a" stroke-width="1.8"/></svg>
<div style="position:absolute;left:2721.3px;top:633.2px;width:86.7px;height:29.5px;background:#323232;border-radius:5px;"></div>
<span style="position:absolute;left:2728.5px;top:637.5px;line-height:23px;font-size:17.32px;color:#9a9a9a;font-weight:400;font-family:'Liberation Sans','DejaVu Sans',sans-serif;white-space:pre;letter-spacing:-0.485px;">Обычн</span>
<svg style="position:absolute;left:2787.8px;top:641.5px;" width="16" height="12" viewBox="0 0 16 12" fill="none"><path d="M3 3.5l5 5 5 -5" stroke="#9a9a9a" stroke-width="1.8"/></svg>
<svg style="position:absolute;left:2813.4px;top:637.5px;" width="22" height="22" viewBox="0 0 22 22" fill="none"><g transform="translate(11,11)" fill="#f0f0f0"><rect x="-2.200" y="-8.5" width="4.400" height="5" transform="rotate(0)"/><rect x="-2.200" y="-8.5" width="4.400" height="5" transform="rotate(45)"/><rect x="-2.200" y="-8.5" width="4.400" height="5" transform="rotate(90)"/><rect x="-2.200" y="-8.5" width="4.400" height="5" transform="rotate(135)"/><rect x="-2.200" y="-8.5" width="4.400" height="5" transform="rotate(180)"/><rect x="-2.200" y="-8.5" width="4.400" height="5" transform="rotate(225)"/><rect x="-2.200" y="-8.5" width="4.400" height="5" transform="rotate(270)"/><rect x="-2.200" y="-8.5" width="4.400" height="5" transform="rotate(315)"/><circle r="5.5"/><circle r="3" fill="#3a3a3a"/></g></svg>
<svg style="position:absolute;left:2852px;top:638px;" width="14" height="20" viewBox="0 0 14 20" fill="none"><path d="M3.500 9V6a3.500 3.500 0 0 1 7 0v1" stroke="#f0f0f0" stroke-width="1.800"/><rect x="1.500" y="9" width="11" height="9.500" rx="1.500" fill="#f0f0f0"/></svg>
<div style="position:absolute;left:2485px;top:674px;width:375px;height:540px;background:#0a0a0a;overflow:hidden;"><div style="position:absolute;left:0px;top:2px;width:24px;height:48px;background:#333333;"></div><div style="position:absolute;left:26px;top:2px;width:48px;height:48px;background:#2a2a2a;"></div><div style="position:absolute;left:76px;top:2px;width:247.5px;height:48px;background:#333333;"></div><div style="position:absolute;left:325.5px;top:2px;width:50px;height:48px;background:#333333;"></div><span style="position:absolute;left:80.0px;top:14.0px;line-height:25px;font-size:16.43px;color:#f4f4f4;font-weight:400;font-family:'Liberation Sans','DejaVu Sans',sans-serif;white-space:pre;letter-spacing:-0.460px;">SPOTLIGHT</span><svg style="position:absolute;left:339.7px;top:19.5px;" width="21" height="14" viewBox="0 0 26 18" fill="none"><path d="M1 9C5 2.500 9 1 13 1s8 1.500 12 8c-4 6.500-8 8-12 8S5 15.500 1 9z" fill="#e8e8e8"/><circle cx="13" cy="8.500" r="5.300" fill="#333333"/><circle cx="13" cy="8.500" r="2.800" fill="#e8e8e8"/></svg><svg style="position:absolute;left:7.5px;top:20px;" width="10" height="11" viewBox="0 0 10 11" fill="none"><path d="M1 1l7.500 4.500-7.500 4.500" stroke="#a0a0a0" stroke-width="1.400"/></svg><div style="position:absolute;left:0px;top:52px;width:24px;height:48px;background:#333333;"></div><div style="position:absolute;left:26px;top:52px;width:48px;height:48px;background:#2a2a2a;"></div><div style="position:absolute;left:76px;top:52px;width:247.5px;height:48px;background:#333333;"></div><div style="position:absolute;left:325.5px;top:52px;width:50px;height:48px;background:#333333;"></div><span style="position:absolute;left:80.0px;top:64.0px;line-height:25px;font-size:15.87px;color:#f4f4f4;font-weight:400;font-family:'Liberation Sans','DejaVu Sans',sans-serif;white-space:pre;letter-spacing:-0.444px;">TITLE</span><svg style="position:absolute;left:339.7px;top:69.5px;" width="21" height="14" viewBox="0 0 26 18" fill="none"><path d="M1 9C5 2.500 9 1 13 1s8 1.500 12 8c-4 6.500-8 8-12 8S5 15.500 1 9z" fill="#e8e8e8"/><circle cx="13" cy="8.500" r="5.300" fill="#333333"/><circle cx="13" cy="8.500" r="2.800" fill="#e8e8e8"/></svg><svg style="position:absolute;left:7.5px;top:70px;" width="10" height="11" viewBox="0 0 10 11" fill="none"><path d="M1 1l7.500 4.500-7.500 4.500" stroke="#a0a0a0" stroke-width="1.400"/></svg><div style="position:absolute;left:0px;top:102px;width:24px;height:48px;background:#333333;"></div><div style="position:absolute;left:26px;top:102px;width:48px;height:48px;background:#2a2a2a;"></div><div style="position:absolute;left:76px;top:102px;width:247.5px;height:48px;background:#333333;"></div><div style="position:absolute;left:325.5px;top:102px;width:50px;height:48px;background:#333333;"></div><span style="position:absolute;left:80.0px;top:114.0px;line-height:25px;font-size:19.5px;color:#f4f4f4;font-weight:400;font-family:'Liberation Sans','DejaVu Sans',sans-serif;white-space:pre;letter-spacing:-0.306px;">Intro</span><svg style="position:absolute;left:339.7px;top:119.5px;" width="21" height="14" viewBox="0 0 26 18" fill="none"><path d="M1 9C5 2.500 9 1 13 1s8 1.500 12 8c-4 6.500-8 8-12 8S5 15.500 1 9z" fill="#e8e8e8"/><circle cx="13" cy="8.500" r="5.300" fill="#333333"/><circle cx="13" cy="8.500" r="2.800" fill="#e8e8e8"/></svg><svg style="position:absolute;left:7.5px;top:120px;" width="10" height="11" viewBox="0 0 10 11" fill="none"><path d="M1 1l7.500 4.500-7.500 4.500" stroke="#a0a0a0" stroke-width="1.400"/></svg><div style="position:absolute;left:0px;top:152px;width:24px;height:48px;background:#333333;"></div><div style="position:absolute;left:26px;top:152px;width:48px;height:48px;background:#2a2a2a;"></div><div style="position:absolute;left:76px;top:152px;width:247.5px;height:48px;background:#333333;"></div><div style="position:absolute;left:325.5px;top:152px;width:50px;height:48px;background:#333333;"></div><span style="position:absolute;left:80.0px;top:164.0px;line-height:25px;font-size:18.45px;color:#f4f4f4;font-weight:400;font-family:'Liberation Sans','DejaVu Sans',sans-serif;white-space:pre;letter-spacing:-0.517px;">Body</span><svg style="position:absolute;left:339.7px;top:169.5px;" width="21" height="14" viewBox="0 0 26 18" fill="none"><path d="M1 9C5 2.500 9 1 13 1s8 1.500 12 8c-4 6.500-8 8-12 8S5 15.500 1 9z" fill="#e8e8e8"/><circle cx="13" cy="8.500" r="5.300" fill="#333333"/><circle cx="13" cy="8.500" r="2.800" fill="#e8e8e8"/></svg><svg style="position:absolute;left:5px;top:169px;" width="15" height="17" viewBox="0 0 15 17" fill="none"><rect x="1" y="1" width="13" height="15" stroke="#a0a0a0" stroke-width="1.500"/><path d="M4.500 5.500h6M7.500 5.500v7" stroke="#a0a0a0" stroke-width="1.800"/></svg><div style="position:absolute;left:0px;top:202px;width:24px;height:48px;background:#333333;"></div><div style="position:absolute;left:26px;top:202px;width:48px;height:48px;background:#2a2a2a;"></div><div style="position:absolute;left:76px;top:202px;width:247.5px;height:48px;background:#333333;"></div><div style="position:absolute;left:325.5px;top:202px;width:50px;height:48px;background:#ffdf20;"></div><span style="position:absolute;left:80.0px;top:214.0px;line-height:25px;font-size:18.49px;color:#8e8e8e;font-weight:400;font-family:'Liberation Sans','DejaVu Sans',sans-serif;white-space:pre;letter-spacing:-0.518px;">Кривая</span><svg style="position:absolute;left:339.7px;top:219.5px;" width="21" height="14" viewBox="0 0 26 18" fill="none"><path d="M1 9C5 2.500 9 1 13 1s8 1.500 12 8c-4 6.500-8 8-12 8S5 15.500 1 9z" fill="#d8d8d8"/><circle cx="13" cy="8.500" r="5.300" fill="#ffdf20"/><circle cx="13" cy="8.500" r="2.800" fill="#d8d8d8"/></svg><svg style="position:absolute;left:4px;top:207px;" width="16" height="20" viewBox="0 0 16 20" fill="none"><path d="M4.200 2.500v15" stroke="#a0a0a0" stroke-width="1.300"/><path d="M12.500 3C6.500 6.500 6.500 13.500 12.500 17" stroke="#a0a0a0" stroke-width="1.300"/><circle cx="4.200" cy="2.500" r="1.500" fill="#a0a0a0"/><circle cx="4.200" cy="17.500" r="1.500" fill="#a0a0a0"/><circle cx="4.200" cy="10" r="2.200" fill="#333" stroke="#a0a0a0" stroke-width="1.300"/></svg><svg style="position:absolute;left:7.5px;top:229px;" width="10" height="11" viewBox="0 0 10 11" fill="none"><path d="M1 1l7.500 4.500-7.500 4.500" stroke="#a0a0a0" stroke-width="1.400"/></svg><div style="position:absolute;left:0px;top:252px;width:24px;height:48px;background:#333333;"></div><div style="position:absolute;left:26px;top:252px;width:48px;height:48px;background:#2a2a2a;"></div><div style="position:absolute;left:76px;top:252px;width:247.5px;height:48px;background:#333333;"></div><div style="position:absolute;left:325.5px;top:252px;width:50px;height:48px;background:#333333;"></div><span style="position:absolute;left:80.0px;top:264.0px;line-height:25px;font-size:18.85px;color:#8e8e8e;font-weight:400;font-family:'Liberation Sans','DejaVu Sans',sans-serif;white-space:pre;letter-spacing:-0.528px;">Сгруппировать</span><svg style="position:absolute;left:339.7px;top:269.5px;" width="21" height="14" viewBox="0 0 26 18" fill="none"><path d="M1 9C5 2.500 9 1 13 1s8 1.500 12 8c-4 6.500-8 8-12 8S5 15.500 1 9z" fill="#e8e8e8"/><circle cx="13" cy="8.500" r="5.300" fill="#333333"/><circle cx="13" cy="8.500" r="2.800" fill="#e8e8e8"/></svg><svg style="position:absolute;left:7.5px;top:270px;" width="10" height="11" viewBox="0 0 10 11" fill="none"><path d="M1 1l7.500 4.500-7.500 4.500" stroke="#a0a0a0" stroke-width="1.400"/></svg><div style="position:absolute;left:0px;top:302px;width:24px;height:48px;background:#333333;"></div><div style="position:absolute;left:26px;top:302px;width:48px;height:48px;background:#2a2a2a;"></div><div style="position:absolute;left:76px;top:302px;width:247.5px;height:48px;background:#333333;"></div><div style="position:absolute;left:325.5px;top:302px;width:50px;height:48px;background:#333333;"></div><span style="position:absolute;left:80.0px;top:314.0px;line-height:25px;font-size:18.9px;color:#f4f4f4;font-weight:400;font-family:'Liberation Sans','DejaVu Sans',sans-serif;white-space:pre;letter-spacing:-0.529px;">Running Headers - Right</span><svg style="position:absolute;left:339.7px;top:319.5px;" width="21" height="14" viewBox="0 0 26 18" fill="none"><path d="M1 9C5 2.500 9 1 13 1s8 1.500 12 8c-4 6.500-8 8-12 8S5 15.500 1 9z" fill="#e8e8e8"/><circle cx="13" cy="8.500" r="5.300" fill="#333333"/><circle cx="13" cy="8.500" r="2.800" fill="#e8e8e8"/></svg><svg style="position:absolute;left:301.7px;top:317px;" width="12" height="18" viewBox="0 0 12 18" fill="none"><path d="M3 8V5.500a3 3 0 0 1 6 0V8" stroke="#e0e0e0" stroke-width="1.800"/><rect x="1" y="8" width="10" height="9" rx="1.500" fill="#e0e0e0"/></svg><svg style="position:absolute;left:7.5px;top:320px;" width="10" height="11" viewBox="0 0 10 11" fill="none"><path d="M1 1l7.500 4.500-7.500 4.500" stroke="#a0a0a0" stroke-width="1.400"/></svg><div style="position:absolute;left:0px;top:352px;width:24px;height:48px;background:#333333;"></div><div style="position:absolute;left:26px;top:352px;width:48px;height:48px;background:#2a2a2a;"></div><div style="position:absolute;left:76px;top:352px;width:247.5px;height:48px;background:#333333;"></div><div style="position:absolute;left:325.5px;top:352px;width:50px;height:48px;background:#333333;"></div><span style="position:absolute;left:80.0px;top:364.0px;line-height:25px;font-size:17.87px;color:#8e8e8e;font-weight:400;font-family:'Liberation Sans','DejaVu Sans',sans-serif;white-space:pre;letter-spacing:-0.500px;">Line</span><svg style="position:absolute;left:339.7px;top:369.5px;" width="21" height="14" viewBox="0 0 26 18" fill="none"><path d="M1 9C5 2.500 9 1 13 1s8 1.500 12 8c-4 6.500-8 8-12 8S5 15.500 1 9z" fill="#e8e8e8"/><circle cx="13" cy="8.500" r="5.300" fill="#333333"/><circle cx="13" cy="8.500" r="2.800" fill="#e8e8e8"/></svg><svg style="position:absolute;left:301.7px;top:367px;" width="12" height="18" viewBox="0 0 12 18" fill="none"><path d="M3 8V5.500a3 3 0 0 1 6 0V8" stroke="#e0e0e0" stroke-width="1.800"/><rect x="1" y="8" width="10" height="9" rx="1.500" fill="#e0e0e0"/></svg><svg style="position:absolute;left:4px;top:366px;" width="16" height="20" viewBox="0 0 16 20" fill="none"><path d="M4.200 2.500v15" stroke="#a0a0a0" stroke-width="1.300"/><path d="M12.500 3C6.500 6.500 6.500 13.500 12.500 17" stroke="#a0a0a0" stroke-width="1.300"/><circle cx="4.200" cy="2.500" r="1.500" fill="#a0a0a0"/><circle cx="4.200" cy="17.500" r="1.500" fill="#a0a0a0"/><circle cx="4.200" cy="10" r="2.200" fill="#333" stroke="#a0a0a0" stroke-width="1.300"/></svg><div style="position:absolute;left:0px;top:402px;width:24px;height:48px;background:#333333;"></div><div style="position:absolute;left:26px;top:402px;width:48px;height:48px;background:#2a2a2a;"></div><div style="position:absolute;left:76px;top:402px;width:247.5px;height:48px;background:#333333;"></div><div style="position:absolute;left:325.5px;top:402px;width:50px;height:48px;background:#333333;"></div><span style="position:absolute;left:80.0px;top:414.0px;line-height:25px;font-size:18.86px;color:#f4f4f4;font-weight:400;font-family:'Liberation Sans','DejaVu Sans',sans-serif;white-space:pre;letter-spacing:-0.528px;">Running Headers - Left</span><svg style="position:absolute;left:339.7px;top:419.5px;" width="21" height="14" viewBox="0 0 26 18" fill="none"><path d="M1 9C5 2.500 9 1 13 1s8 1.500 12 8c-4 6.500-8 8-12 8S5 15.500 1 9z" fill="#e8e8e8"/><circle cx="13" cy="8.500" r="5.300" fill="#333333"/><circle cx="13" cy="8.500" r="2.800" fill="#e8e8e8"/></svg><svg style="position:absolute;left:301.7px;top:417px;" width="12" height="18" viewBox="0 0 12 18" fill="none"><path d="M3 8V5.500a3 3 0 0 1 6 0V8" stroke="#e0e0e0" stroke-width="1.800"/><rect x="1" y="8" width="10" height="9" rx="1.500" fill="#e0e0e0"/></svg><svg style="position:absolute;left:7.5px;top:420px;" width="10" height="11" viewBox="0 0 10 11" fill="none"><path d="M1 1l7.500 4.500-7.500 4.500" stroke="#a0a0a0" stroke-width="1.400"/></svg><div style="position:absolute;left:0px;top:452px;width:24px;height:48px;background:#333333;"></div><div style="position:absolute;left:26px;top:452px;width:48px;height:48px;background:#2a2a2a;"></div><div style="position:absolute;left:76px;top:452px;width:247.5px;height:48px;background:#333333;"></div><div style="position:absolute;left:325.5px;top:452px;width:50px;height:48px;background:#333333;"></div><span style="position:absolute;left:80.0px;top:464.0px;line-height:25px;font-size:17.87px;color:#8e8e8e;font-weight:400;font-family:'Liberation Sans','DejaVu Sans',sans-serif;white-space:pre;letter-spacing:-0.500px;">Line</span><svg style="position:absolute;left:339.7px;top:469.5px;" width="21" height="14" viewBox="0 0 26 18" fill="none"><path d="M1 9C5 2.500 9 1 13 1s8 1.500 12 8c-4 6.500-8 8-12 8S5 15.500 1 9z" fill="#e8e8e8"/><circle cx="13" cy="8.500" r="5.300" fill="#333333"/><circle cx="13" cy="8.500" r="2.800" fill="#e8e8e8"/></svg><svg style="position:absolute;left:301.7px;top:467px;" width="12" height="18" viewBox="0 0 12 18" fill="none"><path d="M3 8V5.500a3 3 0 0 1 6 0V8" stroke="#e0e0e0" stroke-width="1.800"/><rect x="1" y="8" width="10" height="9" rx="1.500" fill="#e0e0e0"/></svg><svg style="position:absolute;left:4px;top:466px;" width="16" height="20" viewBox="0 0 16 20" fill="none"><path d="M4.200 2.500v15" stroke="#a0a0a0" stroke-width="1.300"/><path d="M12.500 3C6.500 6.500 6.500 13.500 12.500 17" stroke="#a0a0a0" stroke-width="1.300"/><circle cx="4.200" cy="2.500" r="1.500" fill="#a0a0a0"/><circle cx="4.200" cy="17.500" r="1.500" fill="#a0a0a0"/><circle cx="4.200" cy="10" r="2.200" fill="#333" stroke="#a0a0a0" stroke-width="1.300"/></svg><div style="position:absolute;left:0px;top:502px;width:24px;height:48px;background:#333333;"></div><div style="position:absolute;left:26px;top:502px;width:48px;height:48px;background:#2a2a2a;"></div><div style="position:absolute;left:76px;top:502px;width:247.5px;height:48px;background:#333333;"></div><div style="position:absolute;left:325.5px;top:502px;width:50px;height:48px;background:#333333;"></div><span style="position:absolute;left:80.0px;top:514.0px;line-height:25px;font-size:18.71px;color:#f4f4f4;font-weight:400;font-family:'Liberation Sans','DejaVu Sans',sans-serif;white-space:pre;letter-spacing:-0.524px;">Background</span><svg style="position:absolute;left:339.7px;top:519.5px;" width="21" height="14" viewBox="0 0 26 18" fill="none"><path d="M1 9C5 2.500 9 1 13 1s8 1.500 12 8c-4 6.500-8 8-12 8S5 15.500 1 9z" fill="#e8e8e8"/><circle cx="13" cy="8.500" r="5.300" fill="#333333"/><circle cx="13" cy="8.500" r="2.800" fill="#e8e8e8"/></svg><svg style="position:absolute;left:301.7px;top:517px;" width="12" height="18" viewBox="0 0 12 18" fill="none"><path d="M3 8V5.500a3 3 0 0 1 6 0V8" stroke="#e0e0e0" stroke-width="1.800"/><rect x="1" y="8" width="10" height="9" rx="1.500" fill="#e0e0e0"/></svg><svg style="position:absolute;left:5px;top:516px;" width="16" height="18" viewBox="0 0 16 18" fill="none"><g fill="#a0a0a0"><rect x="1" y="1" width="6" height="6"/><path d="M12 3l3.500 6h-7z"/><circle cx="4" cy="13.500" r="3.200"/><path d="M12 9.500l3 4-3 4-3-4z"/></g></svg><span style="position:absolute;left:27.0px;top:21.0px;line-height:11px;font-size:8.5px;color:#1c1c1c;font-weight:400;font-family:'Liberation Sans','DejaVu Sans',sans-serif;white-space:pre;letter-spacing:-0.132px;">SPOTLIGHT</span><span style="position:absolute;left:27.0px;top:72.0px;line-height:9px;font-size:4.73px;color:#101010;font-weight:700;font-family:'Liberation Sans','DejaVu Sans',sans-serif;white-space:pre;letter-spacing:-0.132px;transform:scaleY(2.300);">ISABELA HUMPHREY</span><div style="position:absolute;left:29px;top:119px;width:44px;height:1.5px;background:#2e2e2e;"></div><div style="position:absolute;left:29px;top:122.5px;width:44px;height:1.5px;background:#2e2e2e;"></div><div style="position:absolute;left:29px;top:126px;width:44px;height:1.5px;background:#2e2e2e;"></div><div style="position:absolute;left:29px;top:129.5px;width:44px;height:1.5px;background:#2e2e2e;"></div><svg style="position:absolute;left:0;top:0" width="375" height="540" viewBox="0 0 375 540" fill="none"><path d="M47.3 204.2C46.2 205.5 42.6 208.8 40.8 211.6C39.0 214.4 37.4 218.0 36.4 221.2C35.4 224.3 34.4 227.9 34.7 230.7C35.0 233.4 36.4 236.3 38.2 237.6C39.9 239.0 43.1 239.7 45.1 238.9C47.1 238.2 49.1 235.8 50.3 233.3C51.5 230.8 52.3 226.3 52.0 223.8C51.7 221.2 50.2 219.1 48.6 218.1C47.0 217.2 44.2 217.5 42.5 218.1C40.8 218.8 38.9 220.6 38.6 222.0C38.3 223.4 39.4 225.7 40.8 226.4C42.1 227.0 45.1 226.6 46.8 225.9C48.6 225.2 50.4 222.7 51.2 222.0" stroke="#f7de85" stroke-width="2.600" stroke-linecap="round" stroke-linejoin="round"/><path d="M45.1 238.9C46.5 239.2 51.0 241.0 53.8 240.7C56.5 240.3 59.9 238.1 61.6 236.8C63.2 235.4 64.0 233.4 63.7 232.4C63.5 231.4 61.7 230.5 59.8 230.7C58.0 230.9 54.8 232.3 52.9 233.7C51.0 235.2 49.0 237.6 48.6 239.4C48.1 241.2 48.9 243.3 50.3 244.6C51.7 245.9 54.6 246.8 57.2 247.2C59.9 247.5 64.8 246.8 66.3 246.7" stroke="#f7de85" stroke-width="2.600" stroke-linecap="round" stroke-linejoin="round"/></svg><svg style="position:absolute;left:32px;top:259.5px;" width="36" height="20" viewBox="0 0 36 20" fill="none"><path d="M0.500 10C10 -1.500 26 -1.500 35.500 10C26 21.500 10 21.500 0.500 10z" fill="#f6ddd2"/><circle cx="17.900" cy="10" r="5.400" fill="#0c0c0c"/></svg><span style="position:absolute;left:26.5px;top:284.5px;line-height:10px;font-size:7.76px;color:#191919;font-weight:400;font-family:'Liberation Sans','DejaVu Sans',sans-serif;white-space:pre;letter-spacing:0.388px;">SPOTLIGHT</span><div style="position:absolute;left:33px;top:502px;width:34.5px;height:38px;background:#8db1f9;"></div></div>
<div style="position:absolute;left:2860px;top:674px;width:20px;height:540px;background:#2b2b2b;"></div>
<div style="position:absolute;left:2871.5px;top:701px;width:6.5px;height:285px;background:#8a8a8a;border-radius:3px;"></div>
<div style="position:absolute;left:2485px;top:1214px;width:395px;height:47px;background:#363636;"></div>
<svg style="position:absolute;left:2497px;top:1225px;" width="26" height="26" viewBox="0 0 26 26" fill="none"><path d="M13 3H3.500a1.500 1.500 0 0 0-1.500 1.500V22.500a1.500 1.500 0 0 0 1.500 1.500H21.500a1.500 1.500 0 0 0 1.500-1.500V13" stroke="#dedede" stroke-width="1.600"/><path d="M10 16.500l1-4L21.500 2l3 3L14 15.500z" stroke="#dedede" stroke-width="1.500"/></svg>
<div style="position:absolute;left:2585px;top:1227.5px;width:21.5px;height:21px;background:#dedede;border-radius:2px;"></div><span style="position:absolute;left:2595.7px;transform:translateX(-50%);top:1229.0px;line-height:18px;font-size:13.5px;color:#333;font-weight:700;font-family:'Liberation Sans','DejaVu Sans',sans-serif;white-space:pre;letter-spacing:-1px;">FX</span>
<div style="position:absolute;left:2614.8px;top:1227.5px;width:21.5px;height:21px;background:#dedede;border-radius:2px;"></div><div style="position:absolute;left:2619.5px;top:1232px;width:12px;height:12px;background:#363636;border-radius:50%;"></div>
<svg style="position:absolute;left:2646px;top:1227px;" width="19" height="22" viewBox="0 0 19 22" fill="none"><path d="M1 1h17L12 11l6 10H1l6-10z" fill="#dedede"/></svg>
<svg style="position:absolute;left:2675px;top:1227.5px;" width="21" height="21" viewBox="0 0 21 21" fill="none"><circle cx="10.500" cy="10.500" r="9.500" stroke="#dedede" stroke-width="1.600"/><path d="M17.200 3.800A9.500 9.500 0 0 1 3.800 17.200z" fill="#dedede"/></svg>
<svg style="position:absolute;left:2755px;top:1227px;" width="22" height="22" viewBox="0 0 22 22" fill="none"><rect x="1" y="1" width="20" height="20" rx="2" stroke="#dedede" stroke-width="1.600"/><circle cx="9.500" cy="9.500" r="5" fill="#dedede"/><rect x="10.500" y="10.500" width="7.500" height="7.500" fill="#363636" stroke="#dedede" stroke-width="1.500"/></svg>
<svg style="position:absolute;left:2785.5px;top:1227px;" width="23" height="22" viewBox="0 0 23 22" fill="none"><path d="M1 20.500V2.500h7l2 3h11.500v15z" stroke="#dedede" stroke-width="1.600"/><path d="M1 8.500h21" stroke="#dedede" stroke-width="1.500"/></svg>
<svg style="position:absolute;left:2815px;top:1227px;" width="22" height="22" viewBox="0 0 22 22" fill="none"><rect x="1" y="1" width="5" height="5" fill="#dedede"/><rect x="1" y="11" width="5" height="5" fill="#dedede"/><rect x="6" y="6" width="5" height="5" fill="#dedede"/><rect x="6" y="16" width="5" height="5" fill="#dedede"/><rect x="11" y="1" width="5" height="5" fill="#dedede"/><rect x="11" y="11" width="5" height="5" fill="#dedede"/><rect x="16" y="6" width="5" height="5" fill="#dedede"/><rect x="16" y="16" width="5" height="5" fill="#dedede"/></svg>
<svg style="position:absolute;left:2848px;top:1226px;" width="18" height="24" viewBox="0 0 18 24" fill="none"><g stroke="#dedede" stroke-width="1.600"><path d="M1 5.500h16M6 5V2h6v3M3 5.500l.800 16.500h10.400L15 5.500"/><path d="M6.500 9.500v9M9 9.500v9M11.500 9.500v9" stroke-width="1.300"/></g></svg>
<div style="position:absolute;left:2485px;top:1261px;width:395px;height:3.5px;background:#1a1a1a;"></div>
<div style="position:absolute;left:2485px;top:1264.3px;width:395px;height:44.5px;background:#1e1e1e;"></div>
<div style="position:absolute;left:2485px;top:1308.8px;width:395px;height:199px;background:#363636;"></div>
<div style="position:absolute;left:2495px;top:1272px;width:8px;height:29.5px;background:#3a3a3a;border-radius:4px;"></div>
<span style="position:absolute;left:2520.2px;top:1274.5px;line-height:24px;font-size:17.75px;color:#c8c8c8;font-weight:400;font-family:'Liberation Sans','DejaVu Sans',sans-serif;white-space:pre;letter-spacing:-0.497px;">Navigator</span>
<div style="position:absolute;left:2601.2px;top:1270.3px;width:84.5px;height:31.7px;background:#363636;border-radius:7px;"></div>
<span style="position:absolute;left:2607.2px;top:1274.5px;line-height:24px;font-size:16.8px;color:#f4f4f4;font-weight:400;font-family:'Liberation Sans','DejaVu Sans',sans-serif;white-space:pre;letter-spacing:-0.470px;">Transform</span>
<span style="position:absolute;left:2694.0px;top:1274.5px;line-height:24px;font-size:17.84px;color:#c8c8c8;font-weight:400;font-family:'Liberation Sans','DejaVu Sans',sans-serif;white-space:pre;letter-spacing:-0.499px;">History</span>
<div style="position:absolute;left:2852px;top:1274.3px;width:24px;height:23.5px;background:none;border:1.500px solid #8a8a8a;border-radius:5px;"></div><svg style="position:absolute;left:2852px;top:1274.3px;" width="24" height="23.5" viewBox="0 0 24 23.5" fill="none"><path d="M6.0 6.75l6 10 6-10" stroke="#f0f0f0" stroke-width="2.200"/></svg>
<div style="position:absolute;left:2514px;top:1364px;width:46px;height:46px;background:#6a6a6a;"></div>
<div style="position:absolute;left:2509.8px;top:1360px;width:9.2px;height:9.2px;background:#6a6a6a;"></div>
<div style="position:absolute;left:2509.8px;top:1382.5px;width:9.2px;height:9.2px;background:#6a6a6a;"></div>
<div style="position:absolute;left:2509.8px;top:1405px;width:9.2px;height:9.2px;background:#6a6a6a;"></div>
<div style="position:absolute;left:2532.3px;top:1360px;width:9.2px;height:9.2px;background:#6a6a6a;"></div>
<div style="position:absolute;left:2532.3px;top:1405px;width:9.2px;height:9.2px;background:#6a6a6a;"></div>
<div style="position:absolute;left:2554.8px;top:1360px;width:9.2px;height:9.2px;background:#6a6a6a;"></div>
<div style="position:absolute;left:2554.8px;top:1382.5px;width:9.2px;height:9.2px;background:#6a6a6a;"></div>
<div style="position:absolute;left:2554.8px;top:1405px;width:9.2px;height:9.2px;background:#6a6a6a;"></div>
<span style="position:absolute;left:2588.8px;top:1332.0px;line-height:23px;font-size:14.84px;color:#7c7c7c;font-weight:400;font-family:'Liberation Sans','DejaVu Sans',sans-serif;white-space:pre;letter-spacing:-0.415px;">X:</span>
<div style="position:absolute;left:2608.3px;top:1328.0px;width:97.5px;height:29.5px;background:#2f2f2f;border-radius:5px;"></div>
<span style="position:absolute;left:2617.0px;top:1332.0px;line-height:23px;font-size:17.38px;color:#8c8c8c;font-weight:400;font-family:'Liberation Sans','DejaVu Sans',sans-serif;white-space:pre;letter-spacing:-0.487px;">0 mm</span>
<span style="position:absolute;left:2723.3px;top:1332.0px;line-height:23px;font-size:16.42px;color:#7c7c7c;font-weight:400;font-family:'Liberation Sans','DejaVu Sans',sans-serif;white-space:pre;letter-spacing:-0.460px;">Ш:</span>
<div style="position:absolute;left:2748px;top:1328.0px;width:97.5px;height:29.5px;background:#2f2f2f;border-radius:5px;"></div>
<span style="position:absolute;left:2756.7px;top:1332.0px;line-height:23px;font-size:17.5px;color:#8c8c8c;font-weight:400;font-family:'Liberation Sans','DejaVu Sans',sans-serif;white-space:pre;letter-spacing:-0.462px;">0 mm</span>
<span style="position:absolute;left:2589.5px;top:1368.0px;line-height:23px;font-size:14.05px;color:#7c7c7c;font-weight:400;font-family:'Liberation Sans','DejaVu Sans',sans-serif;white-space:pre;letter-spacing:-0.393px;">Y:</span>
<div style="position:absolute;left:2608.3px;top:1364.0px;width:97.5px;height:29.5px;background:#2f2f2f;border-radius:5px;"></div>
<span style="position:absolute;left:2617.0px;top:1368.0px;line-height:23px;font-size:17.38px;color:#8c8c8c;font-weight:400;font-family:'Liberation Sans','DejaVu Sans',sans-serif;white-space:pre;letter-spacing:-0.487px;">0 mm</span>
<span style="position:absolute;left:2728.9px;top:1368.0px;line-height:23px;font-size:14.73px;color:#7c7c7c;font-weight:400;font-family:'Liberation Sans','DejaVu Sans',sans-serif;white-space:pre;letter-spacing:-0.412px;">В:</span>
<div style="position:absolute;left:2748px;top:1364.0px;width:97.5px;height:29.5px;background:#2f2f2f;border-radius:5px;"></div>
<span style="position:absolute;left:2756.7px;top:1368.0px;line-height:23px;font-size:17.5px;color:#8c8c8c;font-weight:400;font-family:'Liberation Sans','DejaVu Sans',sans-serif;white-space:pre;letter-spacing:-0.462px;">0 mm</span>
<span style="position:absolute;left:2587.0px;top:1412.5px;line-height:23px;font-size:15.94px;color:#7c7c7c;font-weight:400;font-family:'Liberation Sans','DejaVu Sans',sans-serif;white-space:pre;letter-spacing:-0.446px;">П:</span>
<div style="position:absolute;left:2608.3px;top:1408.5px;width:97.5px;height:29.5px;background:#2f2f2f;border-radius:5px;"></div>
<span style="position:absolute;left:2617.0px;top:1412.5px;line-height:23px;font-size:16.87px;color:#8c8c8c;font-weight:400;font-family:'Liberation Sans','DejaVu Sans',sans-serif;white-space:pre;letter-spacing:-0.472px;">0 °</span>
<svg style="position:absolute;left:2686.6000000000004px;top:1417px;" width="16" height="12" viewBox="0 0 16 12" fill="none"><path d="M3.5 3.75l4.5 4.5 4.5 -4.5" stroke="#9a9a9a" stroke-width="1.6"/></svg>
<span style="position:absolute;left:2727.0px;top:1412.5px;line-height:23px;font-size:15.89px;color:#7c7c7c;font-weight:400;font-family:'Liberation Sans','DejaVu Sans',sans-serif;white-space:pre;letter-spacing:-0.445px;">Н:</span>
<div style="position:absolute;left:2748px;top:1408.5px;width:97.5px;height:29.5px;background:#2f2f2f;border-radius:5px;"></div>
<span style="position:absolute;left:2756.7px;top:1412.5px;line-height:23px;font-size:16.96px;color:#8c8c8c;font-weight:400;font-family:'Liberation Sans','DejaVu Sans',sans-serif;white-space:pre;letter-spacing:-0.475px;">0 °</span>
<svg style="position:absolute;left:2826.3px;top:1417px;" width="16" height="12" viewBox="0 0 16 12" fill="none"><path d="M3.5 3.75l4.5 4.5 4.5 -4.5" stroke="#9a9a9a" stroke-width="1.6"/></svg>
<svg style="position:absolute;left:2862px;top:1345px;" width="14" height="31" viewBox="0 0 14 31" fill="none"><g stroke="#8a8a8a" stroke-width="1.500"><path d="M2 12V4.500a2.500 2.500 0 0 1 2.500-2.500h5a2.500 2.500 0 0 1 2.500 2.500V12M2 19v7.500a2.500 2.500 0 0 0 2.500 2.500h5a2.500 2.500 0 0 0 2.500-2.500V19M0 15.500h5.500M8.500 15.500h5.500"/></g></svg>
<svg style="position:absolute;left:2786px;top:1459px;" width="26" height="24" viewBox="0 0 26 24" fill="none"><rect x="1.500" y="1.500" width="22" height="20.500" rx="2" stroke="#7a7a7a" stroke-width="1.500" stroke-dasharray="7 3"/><rect x="1" y="11" width="12.500" height="12" rx="2" fill="#777"/></svg>
<svg style="position:absolute;left:2826px;top:1464px;" width="16" height="12" viewBox="0 0 16 12" fill="none"><path d="M3.5 3.75l4.5 4.5 4.5 -4.5" stroke="#e8e8e8" stroke-width="1.8"/></svg>
<div style="position:absolute;left:2047.5px;top:213.5px;width:398px;height:398.5px;background:#1a1a1a;border-radius:12px;box-shadow:2px 4px 10px rgba(0,0,0,.5);"></div>
<div style="position:absolute;left:2048.5px;top:214px;width:396px;height:397px;background:#363636;border-radius:11px;overflow:hidden;"><div style="position:absolute;left:0px;top:0px;width:396px;height:45px;background:#1e1e1e;"></div></div>
<div style="position:absolute;left:2058px;top:222px;width:8px;height:30px;background:#3a3a3a;border-radius:4px;"></div>
<div style="position:absolute;left:2077.4px;top:220.3px;width:136.6px;height:31.2px;background:#363636;border-radius:7px;"></div>
<span style="position:absolute;left:2083.5px;top:224.0px;line-height:24px;font-size:16.74px;color:#f4f4f4;font-weight:400;font-family:'Liberation Sans','DejaVu Sans',sans-serif;white-space:pre;letter-spacing:-0.469px;">Find and Replace</span>
<div style="position:absolute;left:2384px;top:224px;width:24px;height:24px;background:none;border:1.500px solid #8a8a8a;border-radius:5px;"></div><svg style="position:absolute;left:2384px;top:224px;" width="24" height="24" viewBox="0 0 24 24" fill="none"><path d="M6.0 7.0l6 10 6-10" stroke="#f0f0f0" stroke-width="2.200"/></svg>
<div style="position:absolute;left:2423px;top:228px;width:17.5px;height:17.5px;background:#dcdcdc;border-radius:50%;"></div>
<svg style="position:absolute;left:2423px;top:228px;" width="17.5" height="17.5" viewBox="0 0 17.5 17.5" fill="none"><path d="M5 5l7.500 7.500M12.500 5L5 12.500" stroke="#1a1a1a" stroke-width="1.400"/></svg>
<span style="position:absolute;left:2057.0px;top:268.5px;line-height:24px;font-size:17.86px;color:#c4c4c4;font-weight:400;font-family:'Liberation Sans','DejaVu Sans',sans-serif;white-space:pre;letter-spacing:-0.500px;">Поиск</span>
<svg style="position:absolute;left:2418.7px;top:262.6px;" width="22" height="22" viewBox="0 0 22 22" fill="none"><g transform="translate(11,11)" fill="#c4c4c4"><rect x="-2.200" y="-8.5" width="4.400" height="5" transform="rotate(0)"/><rect x="-2.200" y="-8.5" width="4.400" height="5" transform="rotate(45)"/><rect x="-2.200" y="-8.5" width="4.400" height="5" transform="rotate(90)"/><rect x="-2.200" y="-8.5" width="4.400" height="5" transform="rotate(135)"/><rect x="-2.200" y="-8.5" width="4.400" height="5" transform="rotate(180)"/><rect x="-2.200" y="-8.5" width="4.400" height="5" transform="rotate(225)"/><rect x="-2.200" y="-8.5" width="4.400" height="5" transform="rotate(270)"/><rect x="-2.200" y="-8.5" width="4.400" height="5" transform="rotate(315)"/><circle r="5.5"/><circle r="3" fill="#363636"/></g></svg>
<div style="position:absolute;left:2054.3px;top:296.4px;width:387.3px;height:30px;background:#363636;border:2px solid #272727;border-radius:5px;"></div>
<svg style="position:absolute;left:2060px;top:301px;" width="26" height="20" viewBox="0 0 26 20" fill="none"><circle cx="8" cy="9" r="5.800" stroke="#e0e0e0" stroke-width="1.700"/><path d="M12.200 13.200L17 18" stroke="#e0e0e0" stroke-width="2"/><path d="M18 6.500l2.500 2.500 2.500-2.500" stroke="#e0e0e0" stroke-width="1.500"/></svg>
<span style="position:absolute;left:2057.0px;top:371.5px;line-height:24px;font-size:16.87px;color:#c4c4c4;font-weight:400;font-family:'Liberation Sans','DejaVu Sans',sans-serif;white-space:pre;letter-spacing:-0.472px;">Заменить на</span>
<svg style="position:absolute;left:2418.7px;top:365.6px;" width="22" height="22" viewBox="0 0 22 22" fill="none"><g transform="translate(11,11)" fill="#c4c4c4"><rect x="-2.200" y="-8.5" width="4.400" height="5" transform="rotate(0)"/><rect x="-2.200" y="-8.5" width="4.400" height="5" transform="rotate(45)"/><rect x="-2.200" y="-8.5" width="4.400" height="5" transform="rotate(90)"/><rect x="-2.200" y="-8.5" width="4.400" height="5" transform="rotate(135)"/><rect x="-2.200" y="-8.5" width="4.400" height="5" transform="rotate(180)"/><rect x="-2.200" y="-8.5" width="4.400" height="5" transform="rotate(225)"/><rect x="-2.200" y="-8.5" width="4.400" height="5" transform="rotate(270)"/><rect x="-2.200" y="-8.5" width="4.400" height="5" transform="rotate(315)"/><circle r="5.5"/><circle r="3" fill="#363636"/></g></svg>
<div style="position:absolute;left:2054.3px;top:400px;width:387.3px;height:29.5px;background:#363636;border:2px solid #272727;border-radius:5px;"></div>
<svg style="position:absolute;left:2064px;top:410px;" width="12" height="8" viewBox="0 0 12 8" fill="none"><path d="M2 2l3.500 3.500L9 2" stroke="#e0e0e0" stroke-width="1.600"/></svg>
<span style="position:absolute;left:2057.0px;top:478.5px;line-height:22px;font-size:14.94px;color:#c0c0c0;font-weight:400;font-family:'Liberation Sans','DejaVu Sans',sans-serif;white-space:pre;letter-spacing:-0.418px;">Scope:</span>
<div style="position:absolute;left:2111.4px;top:475.8px;width:147px;height:26.5px;background:#4e4e4e;border-radius:3px;"></div>
<span style="position:absolute;left:2118.0px;top:477.5px;line-height:24px;font-size:17.3px;color:#f0f0f0;font-weight:400;font-family:'Liberation Sans','DejaVu Sans',sans-serif;white-space:pre;letter-spacing:-0.485px;">Document</span>
<svg style="position:absolute;left:2239.5px;top:483px;" width="16" height="12" viewBox="0 0 16 12" fill="none"><path d="M3 3.5l5 5 5 -5" stroke="#f0f0f0" stroke-width="2"/></svg>
<div style="position:absolute;left:2057px;top:513.2px;width:112px;height:30.6px;background:#444;border-radius:5px;"></div>
<span style="position:absolute;left:2087.6px;top:517.0px;line-height:24px;font-size:18.5px;color:#6e6e6e;font-weight:400;font-family:'Liberation Sans','DejaVu Sans',sans-serif;white-space:pre;letter-spacing:-0.173px;">Поиск</span>
<div style="position:absolute;left:2178px;top:513.2px;width:111.69999999999982px;height:30.6px;background:#444;border-radius:5px;"></div>
<span style="position:absolute;left:2195.3px;top:517.0px;line-height:24px;font-size:18.2px;color:#6e6e6e;font-weight:400;font-family:'Liberation Sans','DejaVu Sans',sans-serif;white-space:pre;letter-spacing:-0.509px;">Заменить</span>
<div style="position:absolute;left:2299px;top:513.2px;width:117px;height:30.6px;background:#444;border-radius:5px;"></div>
<span style="position:absolute;left:2302.3px;top:517.0px;line-height:24px;font-size:18.21px;color:#6e6e6e;font-weight:400;font-family:'Liberation Sans','DejaVu Sans',sans-serif;white-space:pre;letter-spacing:-0.510px;">Заменить все</span>
<div style="position:absolute;left:2057px;top:553.3px;width:381.6px;height:51px;background:#363636;border:1.500px solid #262626;"></div>
<div style="position:absolute;left:0px;top:0px;width:2880px;height:50px;background:#262626;"></div>
<div style="position:absolute;left:19px;top:8px;width:28px;height:28px;background:#97e565;border-radius:2px;"></div>
<svg style="position:absolute;left:22.4px;top:12px;" width="19.5" height="21.5" viewBox="0 0 31 36" fill="none"><path d="M3.800 1.600L15 0.300C22 -0.200 28.500 2 30 9.500L30 33.700L20 33.300C16.500 35.300 11 35.600 6 34C1 32 0 26 2 21C3.500 17.500 6 15 3.800 11Z" fill="#0a0a0a"/><path d="M2 11.800C11 6.800 20 4.300 27.800 6.300L28.800 7.800C20 9 9 13.500 2.500 20.500Z" fill="#97e565"/><path d="M28.400 9.800C22 11 14 16.500 11.200 22.500C9.800 26 11.500 28.200 14.500 27.500C19 26.300 24.500 18 28.400 9.800Z" fill="#97e565"/><path d="M20.200 33.300L29 15L27.500 14.500L17.500 32Z" fill="#97e565"/></svg>
<div style="position:absolute;left:547px;top:5px;width:68px;height:46px;background:#1c1c1c;border:2px solid #474747;border-bottom:none;box-sizing:border-box;"></div>
<span style="position:absolute;left:86.0px;top:16.0px;line-height:24px;font-size:17.69px;color:#ededed;font-weight:400;font-family:'Liberation Sans','DejaVu Sans',sans-serif;white-space:pre;letter-spacing:-0.495px;">Файл</span>
<span style="position:absolute;left:167.7px;top:16.0px;line-height:24px;font-size:18.5px;color:#ededed;font-weight:400;font-family:'Liberation Sans','DejaVu Sans',sans-serif;white-space:pre;letter-spacing:-0.299px;">Правка</span>
<span style="position:absolute;left:267.0px;top:16.0px;line-height:24px;font-size:18.5px;color:#ededed;font-weight:400;font-family:'Liberation Sans','DejaVu Sans',sans-serif;white-space:pre;letter-spacing:0.018px;">Документ</span>
<span style="position:absolute;left:388.0px;top:16.0px;line-height:24px;font-size:18.45px;color:#ededed;font-weight:400;font-family:'Liberation Sans','DejaVu Sans',sans-serif;white-space:pre;letter-spacing:-0.517px;">Текст</span>
<span style="position:absolute;left:472.0px;top:16.0px;line-height:24px;font-size:18.37px;color:#ededed;font-weight:400;font-family:'Liberation Sans','DejaVu Sans',sans-serif;white-space:pre;letter-spacing:-0.514px;">Vector</span>
<span style="position:absolute;left:562.5px;top:16.0px;line-height:24px;font-size:18.0px;color:#ededed;font-weight:400;font-family:'Liberation Sans','DejaVu Sans',sans-serif;white-space:pre;letter-spacing:-0.504px;">Pixel</span>
<span style="position:absolute;left:638.5px;top:16.0px;line-height:24px;font-size:17.98px;color:#ededed;font-weight:400;font-family:'Liberation Sans','DejaVu Sans',sans-serif;white-space:pre;letter-spacing:-0.503px;">Слой</span>
<span style="position:absolute;left:720.0px;top:16.0px;line-height:24px;font-size:18.47px;color:#ededed;font-weight:400;font-family:'Liberation Sans','DejaVu Sans',sans-serif;white-space:pre;letter-spacing:-0.517px;">Представление</span>
<span style="position:absolute;left:886.6px;top:16.0px;line-height:24px;font-size:18.5px;color:#ededed;font-weight:400;font-family:'Liberation Sans','DejaVu Sans',sans-serif;white-space:pre;letter-spacing:0.100px;">Окно</span>
<span style="position:absolute;left:969.5px;top:16.0px;line-height:24px;font-size:18.5px;color:#ededed;font-weight:400;font-family:'Liberation Sans','DejaVu Sans',sans-serif;white-space:pre;letter-spacing:-0.239px;">Справка</span>
<div style="position:absolute;left:2765px;top:22px;width:15px;height:4px;background:#f0f0f0;"></div>
<div style="position:absolute;left:2808px;top:16px;width:15px;height:13px;background:none;border:2px solid #f0f0f0;border-top-width:4px;box-sizing:border-box;"></div>
<svg style="position:absolute;left:2851px;top:15px;" width="16" height="16" viewBox="0 0 16 16" fill="none"><path d="M1.5 1.5L14.5 14.5M14.5 1.5L1.5 14.5" stroke="#f0f0f0" stroke-width="2"/></svg>
<div style="position:absolute;left:0px;top:50px;width:2880px;height:80px;background:#404040;"></div>
<div style="position:absolute;left:0px;top:130px;width:2880px;height:2px;background:#2a2a2a;"></div>
<svg style="position:absolute;left:21.5px;top:72px;" width="31" height="36" viewBox="0 0 31 36" fill="none"><path d="M3.800 1.600L15 0.300C22 -0.200 28.500 2 30 9.500L30 33.700L20 33.300C16.500 35.300 11 35.600 6 34C1 32 0 26 2 21C3.500 17.500 6 15 3.800 11Z" fill="#ffffff"/><path d="M2 11.800C11 6.800 20 4.300 27.800 6.300L28.800 7.800C20 9 9 13.500 2.500 20.500Z" fill="#404040"/><path d="M28.400 9.800C22 11 14 16.500 11.200 22.500C9.800 26 11.500 28.200 14.500 27.500C19 26.300 24.500 18 28.400 9.800Z" fill="#404040"/><path d="M20.200 33.300L29 15L27.500 14.500L17.500 32Z" fill="#404040"/></svg>
<div style="position:absolute;left:72px;top:60px;width:520px;height:59px;background:#2b2b2b;border-radius:30px;"></div>
<svg style="position:absolute;left:92px;top:80px;" width="22" height="22" viewBox="0 0 22 22" fill="none"><g stroke="#c8c8c8" stroke-width="2"><rect x="1.5" y="2" width="5" height="5" rx="1.500"/><rect x="15.500" y="2" width="5" height="5" rx="1.500"/><circle cx="11" cy="17.500" r="2.800"/><path d="M4 7c0 5 2.500 8.500 5 9.500M18 7c0 5-2.500 8.500-5 9.500"/></g></svg>
<span style="position:absolute;left:124.3px;top:77.5px;line-height:25px;font-size:18.55px;color:#c8c8c8;font-weight:400;font-family:'Liberation Sans','DejaVu Sans',sans-serif;white-space:pre;letter-spacing:-0.519px;">Vector</span>
<div style="position:absolute;left:197px;top:67px;width:104px;height:46px;background:#e784f7;border-radius:20px;"></div>
<svg style="position:absolute;left:211px;top:80px;" width="22" height="22" viewBox="0 0 22 22" fill="none"><circle cx="11" cy="11" r="9" stroke="#111" stroke-width="2.200"/><path d="M11 6.200a4.800 4.800 0 0 1 4.800 4.800" stroke="#111" stroke-width="2"/></svg>
<span style="position:absolute;left:244.0px;top:77.5px;line-height:25px;font-size:17.36px;color:#111;font-weight:400;font-family:'Liberation Sans','DejaVu Sans',sans-serif;white-space:pre;letter-spacing:-0.486px;">Pixel</span>
<svg style="position:absolute;left:315px;top:80px;" width="22" height="22" viewBox="0 0 22 22" fill="none"><g stroke="#c8c8c8" stroke-width="2"><rect x="1.500" y="2" width="6.500" height="18" rx="1.500"/><rect x="12.500" y="2" width="8" height="6.500" rx="1"/><path d="M12 13.500h9.500M12 19h9.500" stroke-width="2.200"/></g></svg>
<span style="position:absolute;left:347.8px;top:77.5px;line-height:25px;font-size:18.52px;color:#c8c8c8;font-weight:400;font-family:'Liberation Sans','DejaVu Sans',sans-serif;white-space:pre;letter-spacing:-0.519px;">Layout</span>
<svg style="position:absolute;left:434px;top:78px;" width="26" height="26" viewBox="0 0 26 26" fill="none"><g fill="#c8c8c8"><path d="M14 4c1 5.500 3 7.500 8.500 9-5.500 1.500-7.500 3.500-8.500 9-1-5.500-3-7.500-8.500-9 5.500-1.500 7.500-3.500 8.500-9z"/><path d="M5 2c.4 2.200 1.200 3 3.500 3.500C6.200 6 5.400 6.800 5 9 4.600 6.800 3.800 6 1.500 5.500 3.800 5 4.600 4.200 5 2zM21 1.500c.3 1.700 1 2.400 2.800 2.800-1.800.4-2.500 1.100-2.800 2.800-.3-1.700-1-2.400-2.800-2.800 1.800-.4 2.500-1.100 2.800-2.800zM5 18c.3 1.700 1 2.400 2.800 2.800-1.800.4-2.500 1.100-2.800 2.800-.3-1.700-1-2.400-2.800-2.800 1.800-.4 2.500-1.100 2.800-2.800z"/></g></svg>
<span style="position:absolute;left:468.5px;top:77.5px;line-height:25px;font-size:17.66px;color:#c8c8c8;font-weight:400;font-family:'Liberation Sans','DejaVu Sans',sans-serif;white-space:pre;letter-spacing:-0.495px;">Canva AI</span>
<span style="position:absolute;left:1714.5px;top:79.0px;line-height:24px;font-size:18.5px;color:#e8e8e8;font-weight:400;font-family:'Liberation Sans','DejaVu Sans',sans-serif;white-space:pre;letter-spacing:-0.399px;">Данные камеры отсутствуют</span>
<div style="position:absolute;left:1969px;top:74px;width:2px;height:32px;background:#2a2a2a;"></div>
<span style="position:absolute;left:1993.0px;top:79.0px;line-height:24px;font-size:18.21px;color:#e8e8e8;font-weight:400;font-family:'Liberation Sans','DejaVu Sans',sans-serif;white-space:pre;letter-spacing:-0.510px;">5032 × 3580 пикс., 18.02 Мп, RGBA/8 — sRGB IEC61966-2.1</span>
<div style="position:absolute;left:2489px;top:74px;width:2px;height:32px;background:#2a2a2a;"></div>
<div style="position:absolute;left:2505.5px;top:68.3px;width:54.5px;height:42.3px;background:#1e1e1e;border:2px solid #5c5c5c;border-radius:9px;box-sizing:border-box;"></div>
<svg style="position:absolute;left:2519px;top:76px;" width="28" height="28" viewBox="0 0 28 28" fill="none"><g transform="translate(14.500,14) rotate(45) scale(1.080)" stroke="#dedede" stroke-width="5.200" fill="none"><path d="M-5.200 3.200V-1.500a5.200 5.200 0 0 1 10.400 0V3.200"/><path d="M-5.200 5.200V7.600M5.200 5.200V7.600"/></g></svg>
<svg style="position:absolute;left:2564px;top:84px;" width="16" height="10" viewBox="0 0 16 10" fill="none"><path d="M3 2.500l5 5 5-5" stroke="#ddd" stroke-width="1.800"/></svg>
<div style="position:absolute;left:2612px;top:71px;width:128px;height:37px;background:#4b4b4b;border-radius:6px;"></div>
<div style="position:absolute;left:2627px;top:77px;width:6px;height:24px;background:#1fd3e8;border-radius:3px;"></div>
<span style="position:absolute;left:2638.5px;top:78.0px;line-height:25px;font-size:18.0px;color:#f0f0f0;font-weight:400;font-family:'Liberation Sans','DejaVu Sans',sans-serif;white-space:pre;letter-spacing:-0.504px;">Export PNG</span>
<svg style="position:absolute;left:2743px;top:84px;" width="16" height="10" viewBox="0 0 16 10" fill="none"><path d="M3 2.500l5 5 5-5" stroke="#ddd" stroke-width="1.800"/></svg>
<div style="position:absolute;left:2807px;top:75.7px;width:27px;height:27px;background:none;border:2.800px solid #2b8ee8;border-radius:50%;box-sizing:border-box;"></div>
<span style="position:absolute;left:2820.5px;transform:translateX(-50%);top:77.0px;line-height:25px;font-size:19px;color:#f2f2f2;font-weight:700;font-family:'Liberation Sans','DejaVu Sans',sans-serif;white-space:pre;">?</span>
<div style="position:absolute;left:0px;top:132px;width:2880px;height:45px;background:#3d3d3d;"></div>
<div style="position:absolute;left:0px;top:177px;width:2880px;height:3px;background:#222;"></div>
<span style="position:absolute;left:8.7px;top:143.0px;line-height:24px;font-size:17.99px;color:#ededed;font-weight:400;font-family:'Liberation Sans','DejaVu Sans',sans-serif;white-space:pre;letter-spacing:-0.504px;">Выделения нет</span>
<div style="position:absolute;left:154px;top:138px;width:2px;height:31px;background:#2a2a2a;"></div>
<div style="position:absolute;left:164px;top:145px;width:18px;height:18px;background:#0a7bff;border-radius:3px;"></div>
<svg style="position:absolute;left:164px;top:145px;" width="18" height="18" viewBox="0 0 18 18" fill="none"><path d="M4 9.200l3.500 3.500L14 5.800" stroke="#fff" stroke-width="2.200"/></svg>
<span style="position:absolute;left:190.6px;top:143.0px;line-height:24px;font-size:17.47px;color:#c4c4c4;font-weight:400;font-family:'Liberation Sans','DejaVu Sans',sans-serif;white-space:pre;letter-spacing:-0.489px;">Auto-select:</span>
<div style="position:absolute;left:294px;top:137px;width:148px;height:34px;background:#333;border-radius:8px;border:1px solid #2a2a2a;box-sizing:border-box;"></div>
<div style="position:absolute;left:294px;top:137px;width:49px;height:34px;background:#1e1e1e;border-radius:8px;border:1.500px solid #6a6a6a;box-sizing:border-box;"></div>
<svg style="position:absolute;left:308px;top:141px;" width="22" height="26" viewBox="0 0 22 26" fill="none"><path d="M3 2.500v18l4.600-4.200 3.200 7.200 3-1.300-3.200-7.100 6.200-.4z" stroke="#e8e8e8" stroke-width="1.800" stroke-linejoin="round"/></svg>
<svg style="position:absolute;left:354px;top:141px;" width="28" height="28" viewBox="0 0 28 28" fill="none"><g stroke="#d6d6d6" stroke-width="2"><rect x="2" y="2" width="15" height="15" rx="4"/><path d="M18.500 9.800a8.200 8.200 0 1 1-9 9"/></g></svg>
<svg style="position:absolute;left:403px;top:142px;" width="26" height="26" viewBox="0 0 26 26" fill="none"><g stroke="#d6d6d6" stroke-width="2"><rect x="2" y="6" width="19" height="17" rx="3"/><path d="M5.500 3h15a3.500 3.500 0 0 1 3.500 3.500v13"/></g></svg>
<div style="position:absolute;left:466px;top:138px;width:2px;height:31px;background:#2a2a2a;"></div>
<div style="position:absolute;left:482px;top:137px;width:120px;height:34px;background:#4a4a4a;border-radius:7px;"></div>
<span style="position:absolute;left:496.7px;top:143.0px;line-height:24px;font-size:18.5px;color:#ededed;font-weight:400;font-family:'Liberation Sans','DejaVu Sans',sans-serif;white-space:pre;">Настройки</span>
<div style="position:absolute;left:547px;top:46px;width:605px;height:666px;background:#1c1c1c;border:2px solid #464646;border-top:2px solid #464646;box-shadow:4px 4px 10px rgba(0,0,0,.55);"></div>
<div style="position:absolute;left:549px;top:44px;width:64px;height:6px;background:#1c1c1c;"></div>
<span style="position:absolute;left:579.0px;top:55.5px;line-height:24px;font-size:18.26px;color:#f2f2f2;font-weight:400;font-family:'Liberation Sans','DejaVu Sans',sans-serif;white-space:pre;letter-spacing:-0.511px;">Фильтры</span>
<svg style="position:absolute;left:1124.5px;top:61.0px;" width="8" height="14" viewBox="0 0 8 14" fill="none"><path d="M0.500 0.500v13l7-6.500z" fill="#f2f2f2"/></svg>
<div style="position:absolute;left:576px;top:90.2px;width:574px;height:2px;background:#3c3c3c;"></div>
<span style="position:absolute;left:579.0px;top:101.7px;line-height:24px;font-size:18.47px;color:#f2f2f2;font-weight:400;font-family:'Liberation Sans','DejaVu Sans',sans-serif;white-space:pre;letter-spacing:-0.517px;">Pixel Selection</span>
<svg style="position:absolute;left:1124.5px;top:107.2px;" width="8" height="14" viewBox="0 0 8 14" fill="none"><path d="M0.500 0.500v13l7-6.500z" fill="#f2f2f2"/></svg>
<div style="position:absolute;left:576px;top:137.3px;width:574px;height:2px;background:#3c3c3c;"></div>
<span style="position:absolute;left:579.0px;top:149.0px;line-height:24px;font-size:18.5px;color:#f2f2f2;font-weight:400;font-family:'Liberation Sans','DejaVu Sans',sans-serif;white-space:pre;letter-spacing:-0.312px;">Новый слой</span>
<span style="position:absolute;left:960.7px;top:150.0px;line-height:24px;font-size:18.5px;color:#f2f2f2;font-weight:400;font-family:'Liberation Sans','DejaVu Sans',sans-serif;white-space:pre;letter-spacing:0.086px;">Ctrl+Shift+N</span>
<span style="position:absolute;left:579.0px;top:188.0px;line-height:24px;font-size:18.5px;color:#f2f2f2;font-weight:400;font-family:'Liberation Sans','DejaVu Sans',sans-serif;white-space:pre;letter-spacing:-0.420px;">New Mask</span>
<svg style="position:absolute;left:1124.5px;top:193.5px;" width="8" height="14" viewBox="0 0 8 14" fill="none"><path d="M0.500 0.500v13l7-6.500z" fill="#f2f2f2"/></svg>
<div style="position:absolute;left:549px;top:222.5px;width:601px;height:33px;background:#686868;"></div>
<span style="position:absolute;left:579.0px;top:227.0px;line-height:24px;font-size:18.5px;color:#f2f2f2;font-weight:400;font-family:'Liberation Sans','DejaVu Sans',sans-serif;white-space:pre;letter-spacing:-0.298px;">Создать корректирующий слой</span>
<svg style="position:absolute;left:1124.5px;top:232.5px;" width="8" height="14" viewBox="0 0 8 14" fill="none"><path d="M0.500 0.500v13l7-6.500z" fill="#f2f2f2"/></svg>
<span style="position:absolute;left:579.0px;top:266.0px;line-height:24px;font-size:18.5px;color:#f2f2f2;font-weight:400;font-family:'Liberation Sans','DejaVu Sans',sans-serif;white-space:pre;letter-spacing:-0.370px;">Новый слой динамического фильтра</span>
<svg style="position:absolute;left:1124.5px;top:271.5px;" width="8" height="14" viewBox="0 0 8 14" fill="none"><path d="M0.500 0.500v13l7-6.500z" fill="#f2f2f2"/></svg>
<span style="position:absolute;left:579.0px;top:305.0px;line-height:24px;font-size:18.49px;color:#f2f2f2;font-weight:400;font-family:'Liberation Sans','DejaVu Sans',sans-serif;white-space:pre;letter-spacing:-0.518px;">Создать слой заливки</span>
<span style="position:absolute;left:579.0px;top:344.0px;line-height:24px;font-size:18.5px;color:#f2f2f2;font-weight:400;font-family:'Liberation Sans','DejaVu Sans',sans-serif;white-space:pre;letter-spacing:-0.385px;">Новый шаблонный слой...</span>
<span style="position:absolute;left:579.0px;top:383.0px;line-height:24px;font-size:18.5px;color:#f2f2f2;font-weight:400;font-family:'Liberation Sans','DejaVu Sans',sans-serif;white-space:pre;letter-spacing:-0.382px;">Новый шаблонный слой из выделения</span>
<div style="position:absolute;left:576px;top:417.8px;width:574px;height:2px;background:#3c3c3c;"></div>
<span style="position:absolute;left:579.0px;top:430.2px;line-height:24px;font-size:18.5px;color:#8c8c8c;font-weight:400;font-family:'Liberation Sans','DejaVu Sans',sans-serif;white-space:pre;letter-spacing:-0.350px;">Инвертировать</span>
<span style="position:absolute;left:960.7px;top:431.2px;line-height:24px;font-size:18.5px;color:#8c8c8c;font-weight:400;font-family:'Liberation Sans','DejaVu Sans',sans-serif;white-space:pre;letter-spacing:0.064px;">Ctrl+I</span>
<span style="position:absolute;left:579.0px;top:469.3px;line-height:24px;font-size:18.5px;color:#f2f2f2;font-weight:400;font-family:'Liberation Sans','DejaVu Sans',sans-serif;white-space:pre;letter-spacing:-0.171px;">Merge</span>
<svg style="position:absolute;left:1124.5px;top:474.8px;" width="8" height="14" viewBox="0 0 8 14" fill="none"><path d="M0.500 0.500v13l7-6.500z" fill="#f2f2f2"/></svg>
<span style="position:absolute;left:579.0px;top:508.0px;line-height:24px;font-size:18.5px;color:#8c8c8c;font-weight:400;font-family:'Liberation Sans','DejaVu Sans',sans-serif;white-space:pre;letter-spacing:-0.470px;">Уточнить маску...</span>
<div style="position:absolute;left:576px;top:542.7px;width:574px;height:2px;background:#3c3c3c;"></div>
<span style="position:absolute;left:579.0px;top:555.0px;line-height:24px;font-size:18.5px;color:#8c8c8c;font-weight:400;font-family:'Liberation Sans','DejaVu Sans',sans-serif;white-space:pre;letter-spacing:-0.302px;">Группа динамического стека</span>
<span style="position:absolute;left:579.0px;top:593.7px;line-height:24px;font-size:18.5px;color:#f2f2f2;font-weight:400;font-family:'Liberation Sans','DejaVu Sans',sans-serif;white-space:pre;letter-spacing:-0.175px;">Динамическая проекция</span>
<svg style="position:absolute;left:1124.5px;top:599.2px;" width="8" height="14" viewBox="0 0 8 14" fill="none"><path d="M0.500 0.500v13l7-6.500z" fill="#f2f2f2"/></svg>
<div style="position:absolute;left:576px;top:628.8px;width:574px;height:2px;background:#3c3c3c;"></div>
<span style="position:absolute;left:579.0px;top:640.7px;line-height:24px;font-size:17.72px;color:#f2f2f2;font-weight:400;font-family:'Liberation Sans','DejaVu Sans',sans-serif;white-space:pre;letter-spacing:-0.496px;">Rasterise</span>
<svg style="position:absolute;left:1124.5px;top:646.2px;" width="8" height="14" viewBox="0 0 8 14" fill="none"><path d="M0.500 0.500v13l7-6.500z" fill="#f2f2f2"/></svg>
<span style="position:absolute;left:579.0px;top:679.8px;line-height:24px;font-size:18.21px;color:#8c8c8c;font-weight:400;font-family:'Liberation Sans','DejaVu Sans',sans-serif;white-space:pre;letter-spacing:-0.510px;">Ретушировать</span>
<span style="position:absolute;left:960.7px;top:680.8px;line-height:24px;font-size:18.5px;color:#8c8c8c;font-weight:400;font-family:'Liberation Sans','DejaVu Sans',sans-serif;white-space:pre;letter-spacing:-0.338px;">Alt+Shift+Backspace</span>
<div style="position:absolute;left:1151.5px;top:220.5px;width:512px;height:953.5px;background:#1c1c1c;border:1.500px solid #4e4e4e;box-shadow:4px 4px 10px rgba(0,0,0,.55);"></div>
<span style="position:absolute;left:1183.3px;top:229.2px;line-height:24px;font-size:18.5px;color:#f2f2f2;font-weight:400;font-family:'Liberation Sans','DejaVu Sans',sans-serif;white-space:pre;letter-spacing:-0.465px;">Экспозиция...</span>
<span style="position:absolute;left:1183.3px;top:268.0px;line-height:24px;font-size:18.5px;color:#f2f2f2;font-weight:400;font-family:'Liberation Sans','DejaVu Sans',sans-serif;white-space:pre;letter-spacing:-0.493px;">Уровни...</span>
<span style="position:absolute;left:1503.0px;top:269.0px;line-height:24px;font-size:18.5px;color:#f2f2f2;font-weight:400;font-family:'Liberation Sans','DejaVu Sans',sans-serif;white-space:pre;letter-spacing:-0.179px;">Ctrl+L</span>
<div style="position:absolute;left:1153px;top:302.5px;width:509px;height:33px;background:#686868;"></div>
<span style="position:absolute;left:1183.3px;top:307.0px;line-height:24px;font-size:18.05px;color:#f2f2f2;font-weight:400;font-family:'Liberation Sans','DejaVu Sans',sans-serif;white-space:pre;letter-spacing:-0.505px;">Баланс белого...</span>
<span style="position:absolute;left:1183.3px;top:346.0px;line-height:24px;font-size:18.5px;color:#f2f2f2;font-weight:400;font-family:'Liberation Sans','DejaVu Sans',sans-serif;white-space:pre;letter-spacing:-0.480px;">Яркость/контраст...</span>
<span style="position:absolute;left:1503.0px;top:347.0px;line-height:24px;font-size:18.5px;color:#f2f2f2;font-weight:400;font-family:'Liberation Sans','DejaVu Sans',sans-serif;white-space:pre;letter-spacing:-0.320px;">Ctrl+B</span>
<div style="position:absolute;left:1180px;top:381.6px;width:482px;height:2px;background:#3c3c3c;"></div>
<span style="position:absolute;left:1183.3px;top:393.0px;line-height:24px;font-size:18.46px;color:#f2f2f2;font-weight:400;font-family:'Liberation Sans','DejaVu Sans',sans-serif;white-space:pre;letter-spacing:-0.517px;">Кривые...</span>
<span style="position:absolute;left:1503.0px;top:394.0px;line-height:24px;font-size:18.5px;color:#f2f2f2;font-weight:400;font-family:'Liberation Sans','DejaVu Sans',sans-serif;white-space:pre;letter-spacing:0.150px;">Ctrl+M</span>
<span style="position:absolute;left:1183.3px;top:432.0px;line-height:24px;font-size:18.5px;color:#f2f2f2;font-weight:400;font-family:'Liberation Sans','DejaVu Sans',sans-serif;white-space:pre;letter-spacing:-0.240px;">Микширование каналов...</span>
<span style="position:absolute;left:1183.3px;top:471.0px;line-height:24px;font-size:18.5px;color:#f2f2f2;font-weight:400;font-family:'Liberation Sans','DejaVu Sans',sans-serif;white-space:pre;letter-spacing:-0.246px;">Выборочная цветокоррекция...</span>
<span style="position:absolute;left:1183.3px;top:510.0px;line-height:24px;font-size:18.43px;color:#f2f2f2;font-weight:400;font-family:'Liberation Sans','DejaVu Sans',sans-serif;white-space:pre;letter-spacing:-0.516px;">Цветовой баланс...</span>
<span style="position:absolute;left:1183.3px;top:549.0px;line-height:24px;font-size:18.28px;color:#f2f2f2;font-weight:400;font-family:'Liberation Sans','DejaVu Sans',sans-serif;white-space:pre;letter-spacing:-0.512px;">Карта градиента...</span>
<span style="position:absolute;left:1183.3px;top:588.0px;line-height:24px;font-size:18.5px;color:#f2f2f2;font-weight:400;font-family:'Liberation Sans','DejaVu Sans',sans-serif;white-space:pre;letter-spacing:-0.454px;">Черно-белый слой...</span>
<span style="position:absolute;left:1503.0px;top:589.0px;line-height:24px;font-size:18.5px;color:#f2f2f2;font-weight:400;font-family:'Liberation Sans','DejaVu Sans',sans-serif;white-space:pre;letter-spacing:0.016px;">Ctrl+Alt+Shift+B</span>
<span style="position:absolute;left:1183.3px;top:627.0px;line-height:24px;font-size:16.54px;color:#f2f2f2;font-weight:400;font-family:'Liberation Sans','DejaVu Sans',sans-serif;white-space:pre;letter-spacing:-0.463px;">HSL...</span>
<span style="position:absolute;left:1503.0px;top:628.0px;line-height:24px;font-size:18.5px;color:#f2f2f2;font-weight:400;font-family:'Liberation Sans','DejaVu Sans',sans-serif;white-space:pre;letter-spacing:-0.223px;">Ctrl+U</span>
<span style="position:absolute;left:1183.3px;top:666.0px;line-height:24px;font-size:18.5px;color:#f2f2f2;font-weight:400;font-family:'Liberation Sans','DejaVu Sans',sans-serif;white-space:pre;letter-spacing:-0.493px;">Изменение цвета...</span>
<span style="position:absolute;left:1183.3px;top:705.0px;line-height:24px;font-size:18.33px;color:#f2f2f2;font-weight:400;font-family:'Liberation Sans','DejaVu Sans',sans-serif;white-space:pre;letter-spacing:-0.513px;">Постеризация...</span>
<span style="position:absolute;left:1183.3px;top:744.0px;line-height:24px;font-size:18.5px;color:#f2f2f2;font-weight:400;font-family:'Liberation Sans','DejaVu Sans',sans-serif;white-space:pre;letter-spacing:-0.452px;">Красочность...</span>
<span style="position:absolute;left:1183.3px;top:783.0px;line-height:24px;font-size:18.5px;color:#f2f2f2;font-weight:400;font-family:'Liberation Sans','DejaVu Sans',sans-serif;white-space:pre;letter-spacing:-0.428px;">Цветопроба...</span>
<span style="position:absolute;left:1183.3px;top:822.0px;line-height:24px;font-size:16.6px;color:#f2f2f2;font-weight:400;font-family:'Liberation Sans','DejaVu Sans',sans-serif;white-space:pre;letter-spacing:-0.465px;">LUT...</span>
<span style="position:absolute;left:1183.3px;top:861.0px;line-height:24px;font-size:17.75px;color:#f2f2f2;font-weight:400;font-family:'Liberation Sans','DejaVu Sans',sans-serif;white-space:pre;letter-spacing:-0.497px;">Светофильтр...</span>
<span style="position:absolute;left:1183.3px;top:900.0px;line-height:24px;font-size:18.49px;color:#f2f2f2;font-weight:400;font-family:'Liberation Sans','DejaVu Sans',sans-serif;white-space:pre;letter-spacing:-0.518px;">Раздельное тонирование...</span>
<span style="position:absolute;left:1183.3px;top:939.0px;line-height:24px;font-size:17.35px;color:#f2f2f2;font-weight:400;font-family:'Liberation Sans','DejaVu Sans',sans-serif;white-space:pre;letter-spacing:-0.486px;">OCIO...</span>
<span style="position:absolute;left:1183.3px;top:978.0px;line-height:24px;font-size:18.5px;color:#f2f2f2;font-weight:400;font-family:'Liberation Sans','DejaVu Sans',sans-serif;white-space:pre;letter-spacing:-0.470px;">Normals...</span>
<span style="position:absolute;left:1183.3px;top:1017.0px;line-height:24px;font-size:18.18px;color:#8c8c8c;font-weight:400;font-family:'Liberation Sans','DejaVu Sans',sans-serif;white-space:pre;letter-spacing:-0.509px;">Tone Compression...</span>
<span style="position:absolute;left:1183.3px;top:1056.0px;line-height:24px;font-size:17.97px;color:#8c8c8c;font-weight:400;font-family:'Liberation Sans','DejaVu Sans',sans-serif;white-space:pre;letter-spacing:-0.503px;">Tone Stretch...</span>
<div style="position:absolute;left:1180px;top:1090.5px;width:482px;height:2px;background:#3c3c3c;"></div>
<span style="position:absolute;left:1183.3px;top:1102.6px;line-height:24px;font-size:18.37px;color:#f2f2f2;font-weight:400;font-family:'Liberation Sans','DejaVu Sans',sans-serif;white-space:pre;letter-spacing:-0.514px;">Инверсия...</span>
<span style="position:absolute;left:1183.3px;top:1141.7px;line-height:24px;font-size:18.5px;color:#f2f2f2;font-weight:400;font-family:'Liberation Sans','DejaVu Sans',sans-serif;white-space:pre;letter-spacing:-0.325px;">Пороговое значение...</span>
</div></body></html>
